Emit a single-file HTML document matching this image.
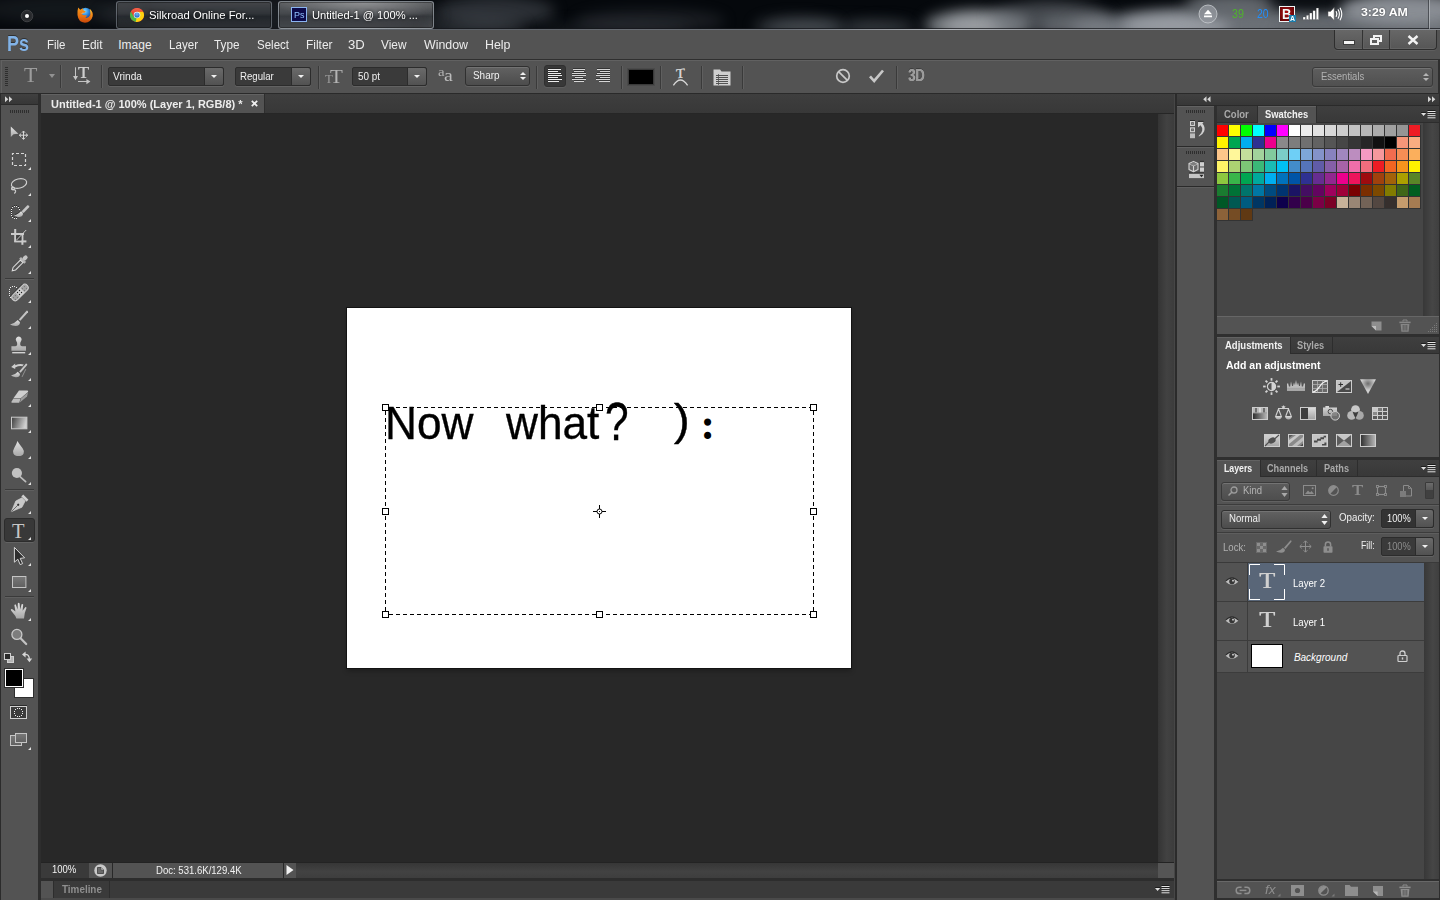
<!DOCTYPE html>
<html lang="en">
<head>
<meta charset="utf-8">
<title>Untitled-1 @ 100% (Layer 1, RGB/8) *</title>
<style>
*{box-sizing:border-box;margin:0;padding:0}
html,body{width:1440px;height:900px;overflow:hidden}
body{position:relative;background:#535353;font-family:"Liberation Sans",sans-serif;font-size:12px;color:#e6e6e6;line-height:1}
.a{position:absolute}
.t{position:absolute;white-space:nowrap;line-height:14px;height:14px}
svg{position:absolute;overflow:visible}
/* ---------- taskbar ---------- */
#task{left:0;top:0;width:1440px;height:30px;background:#05080c;overflow:hidden}
#task .sm{position:absolute;border-radius:50%;filter:blur(7px)}
.tbtn{position:absolute;top:1px;height:28px;border:1px solid rgba(150,160,170,.45);border-radius:3px;background:linear-gradient(180deg,rgba(255,255,255,.22),rgba(255,255,255,.08) 45%,rgba(255,255,255,.02) 55%,rgba(255,255,255,.10));box-shadow:inset 0 0 0 1px rgba(0,0,0,.35)}
.tl{font-size:12.5px;color:#fff;text-shadow:0 0 3px rgba(0,0,0,.9)}
/* ---------- menubar ---------- */
#menu{left:0;top:30px;width:1440px;height:29px;background:#535353}
#menu .t{top:8px;font-size:12px;color:#ececec}
/* ---------- options bar ---------- */
#opts{left:0;top:59px;width:1440px;height:35px;background:#535353;border-top:1px solid #2f2f2f;border-bottom:1px solid #2a2a2a}
.sep{position:absolute;width:1px;background:#3a3a3a;box-shadow:1px 0 0 #5f5f5f}
.field{position:absolute;height:19px;background:#3a3a3a;border:1px solid #2c2c2c;border-radius:2px;box-shadow:0 1px 0 #626262}
.field .t{top:2px;left:6px;font-size:11px;color:#f0f0f0}
.dd{position:absolute;right:0;top:0;bottom:0;width:19px;background:linear-gradient(#6a6a6a,#525252);border-left:1px solid #2c2c2c;border-radius:0 2px 2px 0}
.dd:after{content:"";position:absolute;left:6px;top:7px;border:3px solid transparent;border-top:3px solid #f0f0f0;border-bottom:0}
.pop{position:absolute;height:19px;background:linear-gradient(#626262,#4c4c4c);border:1px solid #303030;border-radius:3px;box-shadow:0 1px 0 #626262, inset 0 1px 0 #737373}
.pop .t{top:2px;left:7px;font-size:11px;color:#f0f0f0}
.ud:before,.ud:after{content:"";position:absolute;right:3px;border:3px solid transparent}
.ud:before{border-bottom:3px solid #f0f0f0;border-top:0;top:5px}
.ud:after{top:10px;border-top:3px solid #f0f0f0;border-bottom:0}
.udg:before{border-bottom-color:#b4b4b4}.udg:after{border-top-color:#b4b4b4}
/* ---------- toolbar ---------- */
#tools{left:0;top:94px;width:41px;height:806px;background:#535353;border-left:1px solid #2b2b2b;border-right:3px solid #2d2d2d}
.corner{position:absolute;width:0;height:0;border:2px solid transparent;border-right-color:#e0e0e0;border-bottom-color:#e0e0e0}
/* ---------- document ---------- */
#doc{left:41px;top:94px;width:1133px;height:806px;background:#282828}
/* ---------- dock ---------- */
#dock{left:1175px;top:94px;width:265px;height:806px;background:#535353}
.ptab{position:absolute;top:0;height:17px;font-size:11px;line-height:17px;color:#b4b4b4;border-right:1px solid #2a2a2a;background:#3b3b3b;text-align:left;white-space:nowrap}
.ptab.on{background:#535353;color:#fff;font-weight:bold;height:18px}
.phead{position:absolute;left:42px;width:221px;height:18px;background:#3b3b3b;border-bottom:1px solid #2a2a2a}
.pmenu{position:absolute;right:4px;top:4px;width:14px;height:9px}
</style>
</head>
<body>
<!-- ================= Windows taskbar ================= -->
<div id="task" class="a">
  <div class="sm" style="left:-20px;top:-6px;width:160px;height:30px;background:rgba(70,76,84,.22)"></div>
  <div class="sm" style="left:435px;top:-4px;width:120px;height:30px;background:rgba(120,126,134,.34)"></div>
  <div class="sm" style="left:425px;top:18px;width:100px;height:20px;background:rgba(110,116,124,.30)"></div>
  <div class="sm" style="left:575px;top:10px;width:150px;height:22px;background:rgba(100,106,114,.24)"></div>
  <div class="sm" style="left:100px;top:-4px;width:340px;height:40px;background:rgba(90,96,104,.22)"></div>
  <div class="sm" style="left:540px;top:22px;width:150px;height:14px;background:rgba(90,96,104,.22)"></div>
  <div class="sm" style="left:755px;top:17px;width:85px;height:20px;background:rgba(120,126,134,.42)"></div>
  <div class="sm" style="left:850px;top:20px;width:70px;height:16px;background:rgba(90,96,104,.30)"></div>
  <div class="sm" style="left:925px;top:10px;width:105px;height:30px;background:rgba(160,165,171,.78)"></div>
  <div class="sm" style="left:945px;top:16px;width:60px;height:20px;background:rgba(190,194,198,.45)"></div>
  <div class="sm" style="left:990px;top:2px;width:120px;height:34px;background:rgba(112,117,123,.62)"></div>
  <div class="sm" style="left:1070px;top:7px;width:400px;height:44px;background:rgba(114,119,125,.94)"></div>
  <div class="sm" style="left:1120px;top:13px;width:110px;height:24px;background:rgba(170,175,181,.72)"></div>
  <div class="sm" style="left:1040px;top:16px;width:80px;height:20px;background:rgba(140,145,151,.45)"></div>
  <div class="sm" style="left:770px;top:20px;width:140px;height:16px;background:rgba(110,116,124,.30)"></div>
  <div class="sm" style="left:1185px;top:-8px;width:95px;height:26px;background:rgba(108,113,119,.85)"></div>
  <div class="sm" style="left:1268px;top:-12px;width:80px;height:23px;background:rgba(10,13,17,.92)"></div>
  <div class="sm" style="left:1340px;top:-8px;width:130px;height:36px;background:rgba(146,151,157,.92)"></div>
  <div class="sm" style="left:1270px;top:24px;width:170px;height:12px;background:rgba(60,64,70,.35)"></div>
  <div class="a" style="left:0;top:28px;width:1440px;height:1px;background:rgba(20,22,26,.7)"></div>
  <div class="a" style="left:0;top:29px;width:1440px;height:1px;background:linear-gradient(90deg,#6a6f76,#5d6268 30%,#6f747b 55%,#b4b8bd 66%,#8c9096 75%,#8a8e94)"></div>

  <!-- start orb -->
  <svg style="left:20px;top:9px" width="14" height="14" viewBox="0 0 14 14"><circle cx="7" cy="7" r="5.8" fill="#2c2e31" stroke="#3e4043" stroke-width="1"/><circle cx="7" cy="7" r="3.6" fill="#232528"/><circle cx="7" cy="7" r="2" fill="#fff"/></svg>
  <!-- firefox -->
  <svg style="left:77px;top:7px" width="16" height="16" viewBox="0 0 16 16">
    <defs><radialGradient id="ffg" cx=".4" cy=".3" r=".7"><stop offset="0" stop-color="#8fdcff"/><stop offset=".5" stop-color="#2f8fe0"/><stop offset="1" stop-color="#123f9c"/></radialGradient>
    <linearGradient id="ffo" x1="0" y1="0" x2="0" y2="1"><stop offset="0" stop-color="#f59a1c"/><stop offset=".55" stop-color="#ea7310"/><stop offset="1" stop-color="#c8480a"/></linearGradient>
    <linearGradient id="ffy" x1="0" y1="0" x2="1" y2="1"><stop offset="0" stop-color="#ffd83c"/><stop offset="1" stop-color="#f08a14" stop-opacity="0"/></linearGradient></defs>
    <circle cx="8.6" cy="6.4" r="5.7" fill="url(#ffg)"/>
    <path d="M1.2 .4 L3.2 2.8 L5.6 1.2 L6.6 3.6 L8.8 4.2 L7.4 5.8 Q6 6.4 4.6 7 Q6.6 8.8 9.6 8 Q10 9.6 8.4 10.8 Q11.8 11.4 13.2 8 Q14.2 5 12.8 2 Q16.6 5.2 15.6 9.6 Q13.8 15.6 8 15.7 Q1.2 15.2 .5 8 Q.1 4 1.2 .4 Z" fill="url(#ffo)"/>
    <path d="M12.8 2 Q16.6 5.2 15.6 9.6 Q14.8 12 13.4 13.4 Q14.6 8 12.8 2 Z" fill="url(#ffy)"/>
    <path d="M3.6 6.6 L6.2 5.4 L6.8 6.2 Z" fill="#ffd9a0"/>
  </svg>
  <!-- task buttons -->
  <div class="tbtn" style="left:116px;width:156px;background:linear-gradient(180deg,rgba(255,255,255,.20),rgba(255,255,255,.11) 45%,rgba(255,255,255,.05) 55%,rgba(255,255,255,.10))"></div>
  <div class="tbtn" style="left:278px;width:156px;border-color:rgba(170,178,186,.6);background:radial-gradient(ellipse 90px 18px at 55% 0,rgba(255,255,255,.34),rgba(255,255,255,0) 100%),linear-gradient(180deg,rgba(255,255,255,.30),rgba(255,255,255,.20) 45%,rgba(255,255,255,.14) 55%,rgba(255,255,255,.20))"></div>
  <!-- chrome -->
  <svg style="left:130px;top:8px" width="14" height="14" viewBox="-7 -7 14 14">
    <defs><linearGradient id="crd" x1="0" y1="0" x2="0" y2="1"><stop offset="0" stop-color="#f4664e"/><stop offset="1" stop-color="#dd2a1c"/></linearGradient>
    <radialGradient id="cbl" cx=".5" cy=".3" r=".7"><stop offset="0" stop-color="#7ab8f2"/><stop offset="1" stop-color="#1c66c4"/></radialGradient></defs>
    <circle r="7" fill="#e0301f"/>
    <path d="M0 0 L-6.06 -3.5 A7 7 0 0 0 -1.2 6.9 L2.6 1.8 Z" fill="#4cb748"/>
    <path d="M0 0 L-1.2 6.9 A7 7 0 0 0 6.06 -3.5 L0 -3.5 Z" fill="#fdd10f"/>
    <path d="M-6.06 -3.5 A7 7 0 0 1 6.06 -3.5 L0 -3.5 L-3.1 1.9 Z" fill="url(#crd)"/>
    <circle r="3.3" fill="#eef3f8"/><circle r="2.6" fill="url(#cbl)"/>
  </svg>
  <div class="t" style="left:149px;top:7.99px;font-size:11px;line-height:14px;height:14px;color:#fff;transform:scaleX(1.0262);transform-origin:0 0;text-shadow:0 0 3px rgba(0,0,0,.9)">Silkroad Online For...</div>
  <!-- ps icon -->
  <div class="a" style="left:291px;top:7px;width:16px;height:15px;background:#0c0a4a;border:1px solid #8ab4f0"></div>
  <div class="t" style="left:294px;top:9.11px;font-size:9.5px;line-height:12px;height:12px;color:#8fc0ff;transform:scaleX(0.9471);transform-origin:0 0">Ps</div>
  <div class="t" style="left:311.6px;top:7.99px;font-size:11px;line-height:14px;height:14px;color:#fff;transform:scaleX(1.0113);transform-origin:0 0;text-shadow:0 0 3px rgba(0,0,0,.9)">Untitled-1 @ 100% ...</div>

  <!-- tray -->
  <svg style="left:1198px;top:4px" width="20" height="20" viewBox="0 0 20 20"><circle cx="10" cy="10" r="9" fill="rgba(150,154,160,.75)" stroke="rgba(200,204,208,.8)" stroke-width="1"/><path d="M10 5.8 L14 10.2 H6 Z M6 11.6 h8 v1.6 h-8 z" fill="#fff"/></svg>
  <div class="t" style="left:1232px;top:5.84px;font-size:12px;line-height:16px;height:16px;color:#4fb32c;transform:scaleX(0.8915);transform-origin:0 0">39</div>
  <div class="t" style="left:1256.7px;top:5.84px;font-size:12px;line-height:16px;height:16px;color:#1f8fff;transform:scaleX(0.8691);transform-origin:0 0">20</div>
  <div class="a" style="left:1279px;top:6px;width:16px;height:16px;background:radial-gradient(circle at 45% 40%,#a80f12,#6a0507 75%,#3c0203);border:1px solid #eef4f4"></div>
  <div class="t" style="left:1282.2px;top:5.15px;font-size:14px;line-height:18px;height:18px;color:#f4fbfb;font-weight:bold;transform:scaleX(0.9297);transform-origin:0 0">B</div>
  <div class="a" style="left:1288.5px;top:15px;width:7px;height:7px;background:#1b7dac"></div>
  <div class="t" style="left:1289.6px;top:13.84px;font-size:7.4px;line-height:10px;height:10px;color:#fff;font-weight:bold;transform:scaleX(0.9356);transform-origin:0 0">A</div>
  <svg style="left:1303px;top:8px" width="16" height="12" viewBox="0 0 16 12"><g fill="#fff" stroke="rgba(40,40,40,.6)" stroke-width=".4"><rect x="0" y="9" width="2.4" height="2.6"/><rect x="3.3" y="7.2" width="2.4" height="4.4"/><rect x="6.6" y="5" width="2.4" height="6.6"/><rect x="9.9" y="2.6" width="2.4" height="9"/><rect x="13.2" y="0" width="2.4" height="11.6"/></g></svg>
  <svg style="left:1327px;top:6px" width="17" height="16" viewBox="0 0 17 16"><path d="M1 5.4 h2.6 L7.2 1.4 V14.6 L3.6 10.6 H1 Z" fill="#fff" stroke="#555" stroke-width=".5"/><path d="M9.2 5.6 Q10.6 8 9.2 10.4 M11.2 3.8 Q13.6 8 11.2 12.2 M13.2 2.2 Q16.4 8 13.2 13.8" fill="none" stroke="#fff" stroke-width="1.1" stroke-linecap="round"/></svg>
  <div class="t" style="left:1360.8px;top:4.22px;font-size:11.5px;line-height:16px;height:16px;color:#fff;font-weight:bold;transform:scaleX(1.0740);transform-origin:0 0;text-shadow:0 0 2px rgba(0,0,0,.5)">3:29 AM</div>
  <div class="a" style="left:1428px;top:0;width:1px;height:29px;background:rgba(40,44,48,.6)"></div>
  <div class="a" style="left:1429px;top:0;width:1px;height:29px;background:rgba(200,204,208,.55)"></div>
</div>
<!-- ================= Menu bar ================= -->
<div id="menu" class="a">
  <div class="t" style="left:6.6px;top:-1.49px;font-size:22.2px;line-height:30px;height:30px;color:#82b3e7;font-weight:bold;transform:scaleX(0.8102);transform-origin:0 0;text-shadow:0 -1px 0 rgba(40,40,40,.8)">Ps</div>
  <div class="t" style="left:47px;top:7.09px;font-size:12px;line-height:16px;height:16px;color:#ececec;transform:scaleX(0.9568);transform-origin:0 0">File</div>
  <div class="t" style="left:82px;top:7.09px;font-size:12px;line-height:16px;height:16px;color:#ececec;transform:scaleX(0.9914);transform-origin:0 0">Edit</div>
  <div class="t" style="left:118.25px;top:7.09px;font-size:12px;line-height:16px;height:16px;color:#ececec">Image</div>
  <div class="t" style="left:169px;top:7.09px;font-size:12px;line-height:16px;height:16px;color:#ececec;transform:scaleX(0.9661);transform-origin:0 0">Layer</div>
  <div class="t" style="left:214px;top:7.09px;font-size:12px;line-height:16px;height:16px;color:#ececec;transform:scaleX(0.9802);transform-origin:0 0">Type</div>
  <div class="t" style="left:256.5px;top:7.09px;font-size:12px;line-height:16px;height:16px;color:#ececec;transform:scaleX(0.9595);transform-origin:0 0">Select</div>
  <div class="t" style="left:306px;top:7.09px;font-size:12px;line-height:16px;height:16px;color:#ececec;transform:scaleX(0.9938);transform-origin:0 0">Filter</div>
  <div class="t" style="left:348.25px;top:7.09px;font-size:12px;line-height:16px;height:16px;color:#ececec;transform:scaleX(1.0919);transform-origin:0 0">3D</div>
  <div class="t" style="left:380.5px;top:7.09px;font-size:12px;line-height:16px;height:16px;color:#ececec;transform:scaleX(0.9886);transform-origin:0 0">View</div>
  <div class="t" style="left:424px;top:7.09px;font-size:12px;line-height:16px;height:16px;color:#ececec;transform:scaleX(1.0309);transform-origin:0 0">Window</div>
  <div class="t" style="left:485px;top:7.09px;font-size:12px;line-height:16px;height:16px;color:#ececec;transform:scaleX(1.0332);transform-origin:0 0">Help</div>
  <!-- window controls -->
  <div class="a" style="left:1334px;top:0;width:103px;height:20px;border:1px solid #2e2e2e;border-top:0;border-radius:0 0 4px 4px;background:linear-gradient(#676767,#565656);box-shadow:inset 0 -1px 0 #636363, 0 1px 0 #5e5e5e"></div>
  <div class="a" style="left:1362px;top:0;width:1px;height:19px;background:#333;box-shadow:1px 0 0 #626262"></div>
  <div class="a" style="left:1389px;top:0;width:1px;height:19px;background:#333;box-shadow:1px 0 0 #626262"></div>
  <div class="a" style="left:1344px;top:11px;width:10px;height:3px;background:#f2f2f2;box-shadow:0 0 0 1px rgba(30,30,30,.5)"></div>
  <svg style="left:1369px;top:4px" width="14" height="12" viewBox="0 0 14 12"><g fill="none" stroke="#f2f2f2" stroke-width="2"><path d="M5 4 V2 H12 V7 H10" /><rect x="2" y="5" width="7" height="5"/></g></svg>
  <svg style="left:1407px;top:5px" width="12" height="10" viewBox="0 0 12 10"><path d="M1.5 1 L10.5 9 M10.5 1 L1.5 9" stroke="#f2f2f2" stroke-width="2.4" fill="none"/></svg>
</div>
<!-- ================= Options bar ================= -->
<div id="opts" class="a">
  <div class="a" style="left:1px;top:0;width:1437px;height:1px;background:#616161"></div>
  <div class="a" style="left:1438px;top:-1px;width:2px;height:35px;background:#2f2f2f"></div>
  <div class="a" style="left:1px;top:0;width:1px;height:33px;background:#616161"></div>
  <!-- grip -->
  <div class="a" style="left:5px;top:7px;width:3px;height:20px;background:repeating-linear-gradient(180deg,#2e2e2e 0 1px,transparent 1px 2px)"></div>
  <!-- tool preset T -->
  <div class="t" style="left:24.4px;top:1.11px;font-size:21.3px;line-height:28px;height:28px;color:#9c9c9c;font-family:'Liberation Serif',serif;transform:scaleX(1.0299);transform-origin:0 0">T</div>
  <div class="a" style="left:49px;top:14px;border:3px solid transparent;border-top:4px solid #929292;border-bottom:0"></div>
  <div class="sep" style="left:60px;top:5px;height:23px"></div>
  <!-- orientation -->
  <svg style="left:72px;top:6px" width="20" height="20" viewBox="72 66 20 20"><g fill="none" stroke="#c4c4c4" stroke-width="1"><path d="M75.5 67.3 V79"/><path d="M78 81.5 H89"/></g><path d="M73 76 H78 L75.5 80.2 Z M86.4 79 L90.4 81.5 L86.4 84.2 Z" fill="#c4c4c4"/></svg>
  <div class="t" style="left:77.6px;top:1.63px;font-size:16.8px;line-height:22px;height:22px;color:#cecece;font-family:'Liberation Serif',serif;transform:scaleX(1.0622);transform-origin:0 0;text-shadow:.3px 0 0 #cecece">T</div>
  <div class="sep" style="left:101px;top:5px;height:23px"></div>
  <!-- font family -->
  <div class="field" style="left:108px;top:7px;width:116px"><div class="t" style="left:4px;top:1.54px;font-size:10px;line-height:14px;height:14px;color:#f0f0f0;transform:scaleX(1.0163);transform-origin:0 0">Vrinda</div><div class="dd"></div></div>
  <div class="field" style="left:235px;top:7px;width:76px"><div class="t" style="left:4px;top:1.54px;font-size:10px;line-height:14px;height:14px;color:#f0f0f0;transform:scaleX(0.9637);transform-origin:0 0">Regular</div><div class="dd"></div></div>
  <div class="sep" style="left:318px;top:6px;height:23px"></div>
  <!-- tT size icon -->
  <div class="t" style="left:325.4px;top:11.38px;font-size:12.5px;line-height:16px;height:16px;color:#9a9a9a;font-family:'Liberation Serif',serif;transform:scaleX(1.0215);transform-origin:0 0">T</div>
  <div class="t" style="left:330.2px;top:4.19px;font-size:19px;line-height:26px;height:26px;color:#b4b4b4;font-family:'Liberation Serif',serif;transform:scaleX(1.1029);transform-origin:0 0">T</div>
  <div class="field" style="left:352px;top:7px;width:75px"><div class="t" style="left:5px;top:1.54px;font-size:10px;line-height:14px;height:14px;color:#f0f0f0;transform:scaleX(0.9892);transform-origin:0 0">50 pt</div><div class="dd"></div></div>
  <!-- aa -->
  <div class="t" style="left:437.6px;top:3.98px;font-size:12.5px;line-height:16px;height:16px;color:#b4b4b4;font-family:'Liberation Serif',serif;transform:scaleX(1.1896);transform-origin:0 0">a</div>
  <div class="t" style="left:444.2px;top:4.56px;font-size:16.7px;line-height:22px;height:22px;color:#bcbcbc;font-family:'Liberation Serif',serif;transform:scaleX(1.1872);transform-origin:0 0">a</div>
  <div class="pop ud" style="left:465px;top:6px;width:65px;height:20px"><div class="t" style="left:7px;top:2.04px;font-size:10px;line-height:14px;height:14px;color:#f0f0f0;transform:scaleX(0.9931);transform-origin:0 0">Sharp</div></div>
  <div class="sep" style="left:536px;top:6px;height:23px"></div>
  <!-- align -->
  <div class="a" style="left:544px;top:5px;width:22px;height:22px;background:#383838;border:1px solid #303030;border-radius:3px;box-shadow:0 1px 0 #5e5e5e"></div>
  <svg style="left:0;top:0" width="640" height="34" viewBox="0 0 640 34" shape-rendering="crispEdges"><rect x="548" y="8" width="13" height="1" fill="rgba(30,30,30,.55)"/><rect x="548" y="9" width="13" height="1" fill="#ececec"/><rect x="548" y="10" width="10" height="1" fill="rgba(30,30,30,.55)"/><rect x="548" y="11" width="10" height="1" fill="#ececec"/><rect x="548" y="12" width="13" height="1" fill="rgba(30,30,30,.55)"/><rect x="548" y="13" width="13" height="1" fill="#ececec"/><rect x="548" y="14" width="14" height="1" fill="rgba(30,30,30,.55)"/><rect x="548" y="15" width="14" height="1" fill="#ececec"/><rect x="548" y="16" width="10" height="1" fill="rgba(30,30,30,.55)"/><rect x="548" y="17" width="10" height="1" fill="#ececec"/><rect x="548" y="18" width="14" height="1" fill="rgba(30,30,30,.55)"/><rect x="548" y="19" width="14" height="1" fill="#ececec"/><rect x="548" y="20" width="11" height="1" fill="rgba(30,30,30,.55)"/><rect x="548" y="21" width="11" height="1" fill="#ececec"/><rect x="573" y="8" width="12" height="1" fill="rgba(30,30,30,.55)"/><rect x="573" y="9" width="12" height="1" fill="#d6d6d6"/><rect x="574" y="10" width="10" height="1" fill="rgba(30,30,30,.55)"/><rect x="574" y="11" width="10" height="1" fill="#d6d6d6"/><rect x="572" y="12" width="14" height="1" fill="rgba(30,30,30,.55)"/><rect x="572" y="13" width="14" height="1" fill="#d6d6d6"/><rect x="572" y="14" width="14" height="1" fill="rgba(30,30,30,.55)"/><rect x="572" y="15" width="14" height="1" fill="#d6d6d6"/><rect x="575" y="16" width="8" height="1" fill="rgba(30,30,30,.55)"/><rect x="575" y="17" width="8" height="1" fill="#d6d6d6"/><rect x="572" y="18" width="14" height="1" fill="rgba(30,30,30,.55)"/><rect x="572" y="19" width="14" height="1" fill="#d6d6d6"/><rect x="574" y="20" width="10" height="1" fill="rgba(30,30,30,.55)"/><rect x="574" y="21" width="10" height="1" fill="#d6d6d6"/><rect x="597" y="8" width="13" height="1" fill="rgba(30,30,30,.55)"/><rect x="597" y="9" width="13" height="1" fill="#d6d6d6"/><rect x="600" y="10" width="10" height="1" fill="rgba(30,30,30,.55)"/><rect x="600" y="11" width="10" height="1" fill="#d6d6d6"/><rect x="597" y="12" width="13" height="1" fill="rgba(30,30,30,.55)"/><rect x="597" y="13" width="13" height="1" fill="#d6d6d6"/><rect x="596" y="14" width="14" height="1" fill="rgba(30,30,30,.55)"/><rect x="596" y="15" width="14" height="1" fill="#d6d6d6"/><rect x="600" y="16" width="10" height="1" fill="rgba(30,30,30,.55)"/><rect x="600" y="17" width="10" height="1" fill="#d6d6d6"/><rect x="596" y="18" width="14" height="1" fill="rgba(30,30,30,.55)"/><rect x="596" y="19" width="14" height="1" fill="#d6d6d6"/><rect x="599" y="20" width="11" height="1" fill="rgba(30,30,30,.55)"/><rect x="599" y="21" width="11" height="1" fill="#d6d6d6"/></svg>
  <div class="sep" style="left:621px;top:6px;height:23px"></div>
  <div class="a" style="left:628px;top:9px;width:26px;height:16px;background:#000;border:1px solid #3a3a3a;box-shadow:0 0 0 1px #4a4a4a"></div>
  <div class="sep" style="left:660px;top:6px;height:23px"></div>
  <!-- warp text -->
  <svg style="left:672px;top:7px" width="17" height="20" viewBox="672 67 17 20"><path d="M673.4 85.4 Q680.4 74.6 687.6 85.4" fill="none" stroke="#d8d8d8" stroke-width="1.3"/></svg>
  <div class="t" style="left:676px;top:5.44px;font-size:13.5px;line-height:18px;height:18px;color:#d4d4d4;font-family:'Liberation Serif',serif;transform:scaleX(1.0914);transform-origin:0 0;transform:scaleX(1.1) rotate(-8deg) skewX(-8deg);transform-origin:50% 100%;text-shadow:.3px 0 0 #d4d4d4">T</div>
  <div class="sep" style="left:701px;top:6px;height:23px"></div>
  <!-- panels toggle -->
  <svg style="left:713px;top:9px" width="18" height="17" viewBox="0 0 18 17"><path d="M.5 .5 H7 L8.5 2.5 H17.5 V16.5 H.5 Z" fill="#d0d0d0"/><g stroke="#535353" stroke-width="1"><path d="M3 6.5H15M3 8.5H15M3 10.5H15M3 12.5H15M3 14.5H15"/><path d="M5.5 5V16" stroke-width=".8"/></g></svg>
  <div class="sep" style="left:742px;top:6px;height:23px"></div>
  <!-- cancel / commit -->
  <svg style="left:835px;top:8px" width="16" height="16" viewBox="0 0 16 16"><circle cx="8" cy="8" r="6.3" fill="none" stroke="#c8c8c8" stroke-width="1.7"/><path d="M3.6 3.6 L12.4 12.4" stroke="#c8c8c8" stroke-width="1.7"/></svg>
  <svg style="left:868px;top:9px" width="17" height="15" viewBox="0 0 17 15"><path d="M1 8.2 L3 6.6 L6 10 L14 .8 L16 2.2 L6.2 14 Z" fill="#c8c8c8"/></svg>
  <div class="sep" style="left:896px;top:6px;height:23px"></div>
  <div class="t" style="left:908.4px;top:5.18px;font-size:16.8px;line-height:22px;height:22px;color:#9a9a9a;font-weight:bold;transform:scaleX(0.7636);transform-origin:0 0;text-shadow:.6px 0 0 #b4b4b4,0 -1px 0 rgba(40,40,40,.5)">3D</div>
  <!-- essentials -->
  <div class="pop ud udg" style="left:1312px;top:7px;width:121px;height:20px;background:linear-gradient(#5e5e5e,#505050);border-color:#3a3a3a"><div class="t" style="left:7.5px;top:1.54px;font-size:10px;line-height:14px;height:14px;color:#b2b2b2;transform:scaleX(0.9490);transform-origin:0 0">Essentials</div></div>
</div>
<!-- ================= Tools panel ================= -->
<div id="tools" class="a">
  <div class="a" style="left:0;top:0;width:37px;height:11px;background:linear-gradient(#404040,#373737);border-bottom:1px solid #2a2a2a"></div>
  <svg style="left:4px;top:2px" width="8" height="7" viewBox="0 0 8 7"><path d="M0 .3 L3.3 3.3 L0 6.3 Z M4 .3 L7.3 3.3 L4 6.3 Z" fill="#d4d4d4"/></svg>
  <div class="a" style="left:9px;top:16px;width:19px;height:3px;background:repeating-linear-gradient(90deg,#2e2e2e 0 1px,transparent 1px 2px)"></div>
  <svg style="left:-1px;top:-94px" width="40" height="900" viewBox="0 0 40 900">
    <defs>
      <linearGradient id="gv" x1="0" y1="0" x2="0" y2="1"><stop offset="0" stop-color="#e2e2e2"/><stop offset="1" stop-color="#a8a8a8"/></linearGradient>
      <linearGradient id="gd" x1="0" y1="0" x2="1" y2=".25"><stop offset="0" stop-color="#3c3c3c"/><stop offset="1" stop-color="#cfcfcf"/></linearGradient>
      <linearGradient id="gr" x1="0" y1="0" x2="0" y2="1"><stop offset="0" stop-color="#787878"/><stop offset="1" stop-color="#606060"/></linearGradient>
    </defs>
    <!-- move -->
    <path d="M10.8 126.6 V137 L13.6 134.2 L18.4 133.8 Z" fill="url(#gv)"/>
    <g stroke="#d8d8d8" stroke-width="1" fill="none"><path d="M19.5 135.2 H27.5 M23.5 131.2 V139.2"/><path d="M21 133.7 L19.3 135.2 L21 136.7 M26 133.7 L27.7 135.2 L26 136.7 M22 132.7 L23.5 131 L25 132.7 M22 137.7 L23.5 139.4 L25 137.7"/></g>
    <!-- marquee -->
    <rect x="12.5" y="153.5" width="13" height="12" fill="none" stroke="#d6d6d6" stroke-width="1.2" stroke-dasharray="3 2" stroke-dashoffset="1.5"/>
    <!-- lasso -->
    <g fill="none" stroke="#cfcfcf" stroke-width="1.2"><ellipse cx="19" cy="183.5" rx="7.8" ry="4.6" transform="rotate(-14 19 183.5)"/><path d="M12.2 187.5 Q11 189.5 13 189.6 Q15.8 189.4 15.6 191.4 Q15.4 192.8 14.2 193.4"/><circle cx="13" cy="188.4" r="1.3"/></g>
    <!-- quick select -->
    <g shape-rendering="crispEdges"><rect x="14" y="205" width="1" height="1" fill="#2a2a2a"/><rect x="14" y="206" width="1" height="1" fill="#e8e8e8"/><rect x="16" y="205" width="1" height="1" fill="#2a2a2a"/><rect x="16" y="206" width="1" height="1" fill="#e8e8e8"/><rect x="12" y="206" width="1" height="1" fill="#2a2a2a"/><rect x="12" y="207" width="1" height="1" fill="#e8e8e8"/><rect x="18" y="206" width="1" height="1" fill="#2a2a2a"/><rect x="18" y="207" width="1" height="1" fill="#e8e8e8"/><rect x="11" y="208" width="1" height="1" fill="#2a2a2a"/><rect x="11" y="209" width="1" height="1" fill="#e8e8e8"/><rect x="19" y="208" width="1" height="1" fill="#2a2a2a"/><rect x="19" y="209" width="1" height="1" fill="#e8e8e8"/><rect x="11" y="210" width="1" height="1" fill="#2a2a2a"/><rect x="11" y="211" width="1" height="1" fill="#e8e8e8"/><rect x="11" y="212" width="1" height="1" fill="#2a2a2a"/><rect x="11" y="213" width="1" height="1" fill="#e8e8e8"/><rect x="11" y="214" width="1" height="1" fill="#2a2a2a"/><rect x="11" y="215" width="1" height="1" fill="#e8e8e8"/><rect x="12" y="216" width="1" height="1" fill="#2a2a2a"/><rect x="12" y="217" width="1" height="1" fill="#e8e8e8"/><rect x="14" y="217" width="1" height="1" fill="#2a2a2a"/><rect x="14" y="218" width="1" height="1" fill="#e8e8e8"/><rect x="16" y="217" width="1" height="1" fill="#2a2a2a"/><rect x="16" y="218" width="1" height="1" fill="#e8e8e8"/></g>
    <path d="M27.4 205.3 Q29.6 205.2 29.4 207 L23.6 213 L21.6 211.2 Z" fill="#c6c6c6"/>
    <path d="M14 215.6 Q17.6 214.6 20 212 Q21.2 211 22.2 212 Q23.4 213.4 22.8 215 Q21.6 217.4 18 217 Q15.4 216.6 14 215.6 Z" fill="url(#gv)"/>
    <path d="M15 214.6 Q18 213.6 20 211.6" stroke="#2c2c2c" stroke-width=".8" fill="none"/>
    <!-- crop -->
    <g fill="#cacaca"><rect x="11" y="233" width="13" height="2"/><rect x="14.2" y="229" width="2" height="12.8"/><rect x="21.4" y="233.2" width="2" height="11.6"/><rect x="14.2" y="240.4" width="12.2" height="2"/></g>
    <rect x="16.2" y="235.2" width="5.2" height="5.2" fill="#404040"/>
    <path d="M16.4 240.2 L26.2 230" stroke="#d4d4d4" stroke-width=".9"/>
    <!-- eyedropper -->
    <g transform="rotate(45 19 264)"><rect x="17" y="252.6" width="4" height="5.6" rx="2" fill="#c4c4c4"/><rect x="15.4" y="257.6" width="7.2" height="2.6" fill="#b6b6b6"/><path d="M17.2 260.2 H20.8 V270.6 L19 273.6 L17.2 270.6 Z" fill="#535353" stroke="#dcdcdc" stroke-width="1"/></g>
    <!-- separators -->
    <g stroke="#3a3a3a" stroke-width="1"><path d="M5 278.5 H34 M5 489.5 H34 M5 596.5 H34"/></g>
    <g stroke="#5f5f5f" stroke-width="1"><path d="M5 279.5 H34 M5 490.5 H34 M5 597.5 H34"/></g>
    <!-- healing -->
    <g shape-rendering="crispEdges"><rect x="12" y="286" width="1" height="1" fill="#ececec"/><rect x="14" y="286" width="1" height="1" fill="#ececec"/><rect x="10" y="287" width="1" height="1" fill="#ececec"/><rect x="16" y="287" width="1" height="1" fill="#ececec"/><rect x="9" y="289" width="1" height="1" fill="#ececec"/><rect x="9" y="291" width="1" height="1" fill="#ececec"/><rect x="9" y="293" width="1" height="1" fill="#ececec"/><rect x="9" y="295" width="1" height="1" fill="#ececec"/><rect x="10" y="297" width="1" height="1" fill="#ececec"/></g>
    <g transform="rotate(-45 20 292.5)"><rect x="9.8" y="289.1" width="20.4" height="6.8" rx="3.4" fill="#a2a2a2" stroke="#cdcdcd" stroke-width="1"/><rect x="16.6" y="289.1" width="6.8" height="6.8" fill="#cfcfcf"/><path d="M10.6 288.2 H28" stroke="#2c2c2c" stroke-width=".8" fill="none" opacity=".8"/></g>
    <g fill="#1e1e1e"><circle cx="19.5" cy="290.5" r=".7"/><circle cx="17.5" cy="292.5" r=".7"/><circle cx="21.5" cy="292.5" r=".7"/><circle cx="19.5" cy="294.5" r=".7"/></g>
    <g fill="#6e6e6e"><circle cx="24.4" cy="286.6" r=".55"/><circle cx="22.4" cy="288.6" r=".55"/><circle cx="26.4" cy="288.6" r=".55"/><circle cx="24.4" cy="290.4" r=".55"/><circle cx="15.4" cy="295.6" r=".55"/><circle cx="13.4" cy="297.6" r=".55"/><circle cx="17.4" cy="297.6" r=".55"/><circle cx="15.4" cy="299.4" r=".55"/></g>
    <!-- brush -->
    <path d="M26.8 310.6 Q28.4 310.8 28 312.2 L20.4 320.8 L18.8 319.4 Z" fill="#c4c4c4"/>
    <path d="M10 324.6 Q14.4 323.6 17.8 320 L20 322.2 Q19.8 326.2 15.4 326 Q12 325.8 10 324.6 Z" fill="url(#gv)"/>
    <!-- stamp -->
    <path d="M18.7 336.5 a2.9 2.9 0 0 1 2.3 4.7 Q20 342.6 20.2 344.4 Q20.4 346 22 346.2 H26 V350.8 H11.4 V346.2 H15.4 Q17 346 17.2 344.4 Q17.4 342.6 16.4 341.2 a2.9 2.9 0 0 1 2.3 -4.7 Z" fill="url(#gv)"/>
    <rect x="12.2" y="352" width="13" height="1.4" fill="#d2d2d2"/>
    <!-- history brush -->
    <path d="M26 363.6 Q27.6 363.8 27.2 365 L20.6 372.8 L19.2 371.6 Z" fill="#c6c6c6"/>
    <path d="M11 375.6 Q15 375 17.8 371.8 L20 374 Q19.8 377.4 15.8 377.2 Q12.6 377 11 375.6 Z" fill="url(#gv)"/>
    <path d="M11.2 367 L15.2 363.4 V365.2 Q20 363.4 23.8 364.6 L22.4 366.2 Q19 365.6 15.2 367.4 V369 Z" fill="#cdcdcd"/>
    <path d="M25.6 369.6 L22.2 376.6" stroke="#dcdcdc" stroke-width="1" stroke-dasharray="1 1.2" fill="none"/>
    <!-- eraser -->
    <path d="M19 390.4 H27.4 Q28.6 390.6 28 392 L21 398 H13.6 Z" fill="#cfcfcf"/>
    <path d="M13.4 398.4 H20.6 L19.2 402.8 H12 Q11 402.6 11.6 401.4 Z" fill="#bdbdbd"/>
    <path d="M21.2 398.2 L28 392.4 L27 396.4 L19.8 402.6 Z" fill="#9c9c9c"/>
    <!-- gradient -->
    <rect x="11.5" y="417.2" width="15.4" height="11.6" fill="url(#gd)" stroke="#cacaca" stroke-width="1"/>
    <!-- blur -->
    <path d="M17.4 441 Q19.4 444.4 22.6 448.2 Q24.6 451 23.6 453.4 Q22.4 456 18.6 456 Q14.8 456 13.4 453.4 Q12.4 451 14.2 448 Q16.6 444 17.4 441 Z" fill="url(#gv)"/>
    <!-- dodge -->
    <circle cx="16.9" cy="473" r="5.1" fill="#c2c2c2"/>
    <path d="M20 476.6 L25.6 481.6" stroke="#bcbcbc" stroke-width="1.7" stroke-linecap="round"/>
    <!-- pen -->
    <g transform="translate(11.3 511.7) scale(.88) translate(-11.3 -511.7) rotate(45 19.6 503.4)"><rect x="15.4" y="491.8" width="8.4" height="3" fill="#cfcfcf"/><path d="M17 495.4 H22.2 L24.6 503 L19.6 515.2 L14.6 503 Z" fill="#c8c8c8" stroke="#d8d8d8" stroke-width=".6"/><path d="M19.6 515 V505" stroke="#4a4a4a" stroke-width=".8"/><circle cx="19.6" cy="504" r="1.25" fill="#333"/></g>
    <!-- type (selected) -->
    <rect x="4.5" y="518.5" width="30" height="23" rx="2.5" fill="#383838" stroke="#2c2c2c"/>
    <path d="M5.5 542.5 H33.5" stroke="#626262"/>
    <!-- path select -->
    <path d="M14.4 547.4 V562.2 L17.8 559.2 L20.2 564.6 L22.6 563.6 L20.2 558.4 L24.6 557.8 Z" fill="#2e2e2e" stroke="#d6d6d6" stroke-width="1" stroke-linejoin="miter"/>
    <!-- rectangle -->
    <rect x="12.5" y="576.5" width="13.4" height="11" fill="url(#gr)" stroke="#c4c4c4"/>
    <!-- hand -->
    <path d="M16.4 618.4 Q15.6 615.6 12.6 612.4 Q10.4 610 10.8 609.4 Q12 608.4 14.4 610.8 L15.4 611.6 L14.4 605.2 Q14.6 604 15.8 604.6 L17.6 609.6 L17.8 603.4 Q18.6 602.2 19.6 603.4 L20.2 609.6 L21.6 604.2 Q22.6 603.4 23.2 604.6 L22.6 610.8 L25.2 607.2 Q26.6 606.8 26.4 608.2 Q24.6 612 24 618.4 Z" fill="url(#gv)"/>
    <!-- zoom -->
    <circle cx="16.9" cy="634.4" r="5" fill="#7d7d7d" stroke="#c9c9c9" stroke-width="1.3"/>
    <path d="M20.8 638.4 L26.2 644" stroke="#c2c2c2" stroke-width="2.2" stroke-linecap="round"/>
    <!-- default colours -->
    <rect x="7.5" y="656.5" width="6" height="6" fill="#b4b4b4" stroke="#cfcfcf"/>
    <rect x="4.5" y="653.5" width="6" height="6" fill="#2a2a2a" stroke="#cfcfcf"/>
    <!-- swap -->
    <g fill="none" stroke="#d6d6d6" stroke-width="1.3"><path d="M24 654.4 Q29.6 653.6 29.4 660"/></g>
    <path d="M22 654.6 L25.6 651.6 V657.6 Z M26.6 658.6 H32.2 L29.4 662.2 Z" fill="#d6d6d6"/>
    <!-- fg / bg -->
    <rect x="14" y="678" width="20" height="20" fill="#2e2e2e"/>
    <rect x="15" y="679" width="18" height="18" fill="#ffffff"/>
    <rect x="4" y="668" width="20" height="20" fill="#2e2e2e"/>
    <rect x="5" y="669" width="18" height="18" fill="#ffffff"/>
    <rect x="6" y="670" width="16" height="16" fill="#000"/>
    <!-- quick mask -->
    <path d="M10 705.5 H27" stroke="#2c2c2c"/>
    <rect x="10.5" y="706.5" width="16" height="12" fill="#3c3c3c" stroke="#d0d0d0"/>
    <g shape-rendering="crispEdges"><rect x="17" y="708" width="1" height="1" fill="#f0f0f0"/><rect x="19" y="708" width="1" height="1" fill="#f0f0f0"/><rect x="15" y="709" width="1" height="1" fill="#f0f0f0"/><rect x="21" y="709" width="1" height="1" fill="#f0f0f0"/><rect x="14" y="711" width="1" height="1" fill="#f0f0f0"/><rect x="22" y="711" width="1" height="1" fill="#f0f0f0"/><rect x="14" y="713" width="1" height="1" fill="#f0f0f0"/><rect x="22" y="713" width="1" height="1" fill="#f0f0f0"/><rect x="15" y="715" width="1" height="1" fill="#f0f0f0"/><rect x="21" y="715" width="1" height="1" fill="#f0f0f0"/><rect x="17" y="716" width="1" height="1" fill="#f0f0f0"/><rect x="19" y="716" width="1" height="1" fill="#f0f0f0"/></g>
    <!-- screen mode -->
    <rect x="10.5" y="735.5" width="11" height="10" fill="url(#gr)" stroke="#c4c4c4"/>
    <rect x="15.5" y="733.5" width="11" height="9" fill="url(#gr)" stroke="#c4c4c4"/>
    <!-- corner triangles -->
    <g fill="#e2e2e2">
      <path d="M31 167 V170 H28 Z M31 193 V196 H28 Z M31 219 V222 H28 Z M31 245 V248 H28 Z M31 271 V274 H28 Z M31 300 V303 H28 Z M31 326 V329 H28 Z M31 352 V355 H28 Z M31 378 V381 H28 Z M31 404 V407 H28 Z M31 430 V433 H28 Z M31 456 V459 H28 Z M31 482 V485 H28 Z M31 511 V514 H28 Z M31 537 V540 H28 Z M31 563 V566 H28 Z M31 589 V592 H28 Z M31 618 V621 H28 Z M31 747 V750 H28 Z"/>
    </g>
  </svg>
  <div class="t" style="left:11px;top:426px;font-family:'Liberation Serif',serif;font-size:20.5px;line-height:22px;height:22px;color:#c6c6c6">T</div>
</div>
<!-- ================= Document window ================= -->
<div id="doc" class="a">
  <!-- tab strip -->
  <div class="a" style="left:0;top:0;width:1133px;height:19px;background:linear-gradient(#3e3e3e,#383838)"></div>
  <div class="a" style="left:0;top:0;width:223px;height:19px;background:#535353;border-top:1px solid #626262;box-shadow:1px 0 0 #2e2e2e"></div>
  <div class="t" style="left:9.5px;top:3.36px;font-size:10.5px;line-height:14px;height:14px;color:#ededed;font-weight:bold;transform:scaleX(1.0467);transform-origin:0 0">Untitled-1 @ 100% (Layer 1, RGB/8) *</div>
  <svg style="left:209.5px;top:6px" width="7" height="7" viewBox="0 0 7 7"><path d="M.8 .8 L6.2 6.2 M6.2 .8 L.8 6.2" stroke="#f0f0f0" stroke-width="1.7"/></svg>
  <div class="a" style="left:0;top:19px;width:1133px;height:1px;background:#262626"></div>
  <!-- scrollbars -->
  <div class="a" style="left:1117px;top:20px;width:16px;height:748px;background:linear-gradient(90deg,#343434,#424242 55%,#3c3c3c)"></div>
  <div class="a" style="left:255px;top:769px;width:862px;height:15px;background:linear-gradient(180deg,#363636,#424242 55%,#3e3e3e)"></div>
  <div class="a" style="left:1117px;top:769px;width:16px;height:15px;background:#555"></div>
  <!-- status bar -->
  <div class="a" style="left:0;top:768px;width:1133px;height:1px;background:#232323"></div>
  <div class="a" style="left:0;top:769px;width:48px;height:15px;background:#3a3a3a"></div>
  <div class="t" style="left:11.4px;top:768.83px;font-size:10px;line-height:14px;height:14px;color:#f2f2f2;transform:scaleX(0.9501);transform-origin:0 0">100%</div>
  <div class="a" style="left:48px;top:769px;width:23px;height:15px;background:#535353"></div>
  <svg style="left:53px;top:770px" width="13" height="13" viewBox="0 0 13 13"><circle cx="6.5" cy="6.5" r="6.2" fill="#c8c8c8"/><path d="M3.5 3.5 H7 L9.5 6 V9.5 H3.5 Z" fill="#6a6a6a" stroke="#3c3c3c" stroke-width=".8"/><path d="M7 3.5 V6 H9.5" fill="#d8d8d8" stroke="#3c3c3c" stroke-width=".6"/></svg>
  <div class="a" style="left:72px;top:769px;width:170px;height:15px;background:#535353"></div>
  <div class="t" style="left:114.5px;top:769.83px;font-size:10px;line-height:14px;height:14px;color:#f2f2f2;transform:scaleX(0.9563);transform-origin:0 0">Doc: 531.6K/129.4K</div>
  <div class="a" style="left:243px;top:769px;width:12px;height:15px;background:#535353"></div>
  <svg style="left:245px;top:771px" width="8" height="10" viewBox="0 0 8 10"><path d="M.5 0 L7.5 5 L.5 10 Z" fill="#f2f2f2"/></svg>
  <div class="a" style="left:0;top:784px;width:1136px;height:3px;background:#2d2d2d"></div>
  <!-- timeline -->
  <div class="a" style="left:0;top:787px;width:1133px;height:17px;background:#3a3a3a"></div>
  <div class="a" style="left:0;top:787px;width:13px;height:17px;background:#535353;border-right:1px solid #2d2d2d"></div>
  <div class="a" style="left:68px;top:787px;width:1px;height:17px;background:#2d2d2d"></div>
  <div class="t" style="left:20.7px;top:788.74px;font-size:10px;line-height:14px;height:14px;color:#8f8f8f;font-weight:bold;transform:scaleX(0.9880);transform-origin:0 0">Timeline</div>
  <svg style="left:1115px;top:791px" width="15" height="9" viewBox="0 0 15 9"><path d="M-1 3 H4.2 L1.6 6 Z" fill="#e0e0e0"/><path d="M-1 2.5 H4.2" stroke="#1e1e1e" stroke-width="1"/><path d="M5.5 .5 H13.5 M5.5 2.6 H13.5 M5.5 4.7 H13.5 M5.5 6.8 H13.5" stroke="#1a1a1a" stroke-width="1"/><path d="M5.5 1.5 H13.5 M5.5 3.6 H13.5 M5.5 5.7 H13.5 M5.5 7.8 H13.5" stroke="#e4e4e4" stroke-width="1"/></svg>
  <div class="a" style="left:0;top:804px;width:1133px;height:2px;background:#4a4a4a"></div>

  <!-- canvas -->
  <div class="a" style="left:306px;top:214px;width:504px;height:360px;background:#fff;box-shadow:0 0 0 1px #131313,0 3px 5px rgba(0,0,0,.28)"></div>
  <div class="t" style="left:344px;top:303px;font-size:45.8px;line-height:54px;height:54px;color:#000;transform:scaleX(.965);transform-origin:0 0;-webkit-text-stroke:.35px #000">Now</div>
  <div class="t" style="left:465px;top:303px;font-size:45.8px;line-height:54px;height:54px;color:#000;transform:scaleX(.965);transform-origin:0 0;-webkit-text-stroke:.35px #000">what</div>
  <div class="t" style="left:563.6px;top:296.7px;font-size:53px;line-height:62px;height:62px;color:#000;transform:scaleX(.8);transform-origin:0 0;-webkit-text-stroke:.3px #000">?</div>
  <div class="t" style="left:633.4px;top:300.2px;font-size:44.4px;line-height:52px;height:52px;color:#000;transform:scaleX(1.06);transform-origin:0 0;-webkit-text-stroke:.4px #000">)</div>
  <div class="t" style="left:659.5px;top:300.72px;font-size:43.5px;line-height:58px;height:58px;color:#000;font-family:'Liberation Serif',serif;font-weight:bold">:</div>
  <!-- text box -->
  <svg style="left:0;top:0" width="1133" height="806" viewBox="41 94 1133 806" shape-rendering="crispEdges">
    <g fill="none" stroke="#000" stroke-width="1" stroke-dasharray="4 3">
      <path d="M389 407.5 H810 M389 614.5 H810 M385.5 411 V611 M813.5 411 V611"/>
    </g>
    <g fill="#fff" stroke="#000" stroke-width="1">
      <rect x="382.5" y="404.5" width="6" height="6"/><rect x="596.5" y="404.5" width="6" height="6"/><rect x="810.5" y="404.5" width="6" height="6"/>
      <rect x="382.5" y="508.5" width="6" height="6"/><rect x="810.5" y="508.5" width="6" height="6"/>
      <rect x="382.5" y="611.5" width="6" height="6"/><rect x="596.5" y="611.5" width="6" height="6"/><rect x="810.5" y="611.5" width="6" height="6"/>
    </g>
    <g fill="none" stroke="#000" stroke-width="1"><path d="M599.5 505 V518 M593 511.5 H606"/><circle cx="599.5" cy="511.5" r="2.5" fill="#fff" shape-rendering="auto"/><rect x="599" y="511" width="1" height="1" fill="#000" stroke="none"/></g>
  </svg>
</div>
<!-- ================= Right dock ================= -->
<div class="a" id="dock" style="left:0;top:0;width:0;height:0;background:none">
<div class="a" style="left:1174px;top:94px;width:3px;height:806px;background:#2b2b2b;border-left:1px solid #464646"></div>
<div class="a" style="left:1177px;top:94px;width:263px;height:806px;background:#535353"></div>
<div class="a" style="left:1177px;top:94px;width:263px;height:11px;background:linear-gradient(#404040,#373737)"></div>
<div class="a" style="left:1177px;top:105px;width:263px;height:1px;background:#2a2a2a"></div>
<svg style="left:1203px;top:96px" width="8" height="7" viewBox="0 0 8 7"><path d="M3.5 .3 L.2 3.3 L3.5 6.3 Z M7.5 .3 L4.2 3.3 L7.5 6.3 Z" fill="#d4d4d4"/></svg>
<svg style="left:1428px;top:96px" width="8" height="7" viewBox="0 0 8 7"><path d="M0 .3 L3.3 3.3 L0 6.3 Z M4 .3 L7.3 3.3 L4 6.3 Z" fill="#d4d4d4"/></svg>
<div class="a" style="left:1214px;top:106px;width:3px;height:794px;background:#2f2f2f"></div>
<div class="a" style="left:1177px;top:146px;width:37px;height:1px;background:#2a2a2a"></div>
<div class="a" style="left:1177px;top:147px;width:37px;height:1px;background:#626262"></div>
<div class="a" style="left:1177px;top:186px;width:37px;height:1px;background:#2a2a2a"></div>
<div class="a" style="left:1177px;top:187px;width:37px;height:1px;background:#5e5e5e"></div>
<div class="a" style="left:1177px;top:106px;width:37px;height:1px;background:#626262"></div>
<div class="a" style="left:1186px;top:110px;width:19px;height:3px;background:repeating-linear-gradient(90deg,#2e2e2e 0 1px,transparent 1px 2px)"></div>
<div class="a" style="left:1186px;top:151px;width:19px;height:3px;background:repeating-linear-gradient(90deg,#2e2e2e 0 1px,transparent 1px 2px)"></div>
<svg style="left:1188px;top:118px" width="20" height="22" viewBox="1188 118 20 22"><path d="M1190 120.5 H1195 M1198 121.3 H1203.6" stroke="#2c2c2c" stroke-width="1" fill="none"/><g fill="none" stroke="#d0d0d0" stroke-width="1.2"><rect x="1190.6" y="121.6" width="3.8" height="3.8"/><rect x="1190.6" y="127.9" width="3.8" height="3.8"/></g><rect x="1192" y="123" width="1.2" height="1.2" fill="#8a8a8a"/><rect x="1192" y="129.2" width="1.2" height="1.2" fill="#8a8a8a"/><rect x="1190" y="133.4" width="5" height="4.8" fill="#bdbdbd"/><path d="M1198 122 H1203.6 L1202.4 123.4 Q1205.6 127 1204.2 131.2 Q1203 134.4 1199 136.6 L1198.6 136 Q1201.6 133.6 1202.2 130.6 Q1202.8 127.6 1200.6 125.2 L1198 127.6 Z" fill="#d0d0d0"/></svg>
<svg style="left:1188px;top:159px" width="20" height="22" viewBox="1188 159 20 22"><path d="M1200 161.3 H1204 M1189 173 H1204" stroke="#2c2c2c" stroke-width="1" fill="none"/><g stroke="#d4d4d4" stroke-width="1.1" stroke-linejoin="round"><path d="M1193.5 161.4 L1198 163.6 V169.4 L1193.5 171.8 L1189 169.4 V163.6 Z" fill="#6a6a6a"/><path d="M1189 163.6 L1193.5 165.8 L1198 163.6 M1193.5 165.8 V171.8" fill="none"/></g><path d="M1189.6 163.9 L1193.5 165.8 L1197.4 163.9 L1193.5 162 Z" fill="#7e7e7e"/><rect x="1200" y="162.2" width="4" height="4.2" fill="#cfcfcf"/><rect x="1200" y="167.5" width="4" height="4.2" fill="#cfcfcf"/><rect x="1189" y="173.8" width="15" height="4.3" fill="#c6c6c6"/><path d="M1199.4 174.8 H1203.6 L1201.5 177.2 Z" fill="#222"/></svg>
<div class="a" style="left:1217px;top:106px;width:223px;height:17px;background:linear-gradient(#3f3f3f,#383838)"></div>
<div class="a" style="left:1217px;top:122px;width:223px;height:1px;background:#2d2d2d"></div>
<div class="t" style="left:1224.2px;top:107.53px;font-size:10px;line-height:14px;height:14px;color:#a9a9a9;font-weight:bold;transform:scaleX(0.9499);transform-origin:0 0">Color</div>
<div class="a" style="left:1257px;top:106px;width:1px;height:16px;background:#2d2d2d"></div>
<div class="a" style="left:1258px;top:106px;width:58px;height:17px;background:#535353;border-top:1px solid #626262"></div>
<div class="t" style="left:1265px;top:107.53px;font-size:10px;line-height:14px;height:14px;color:#f2f2f2;font-weight:bold;transform:scaleX(0.9364);transform-origin:0 0">Swatches</div>
<div class="a" style="left:1316px;top:106px;width:1px;height:16px;background:#2d2d2d"></div>
<svg style="left:1422px;top:110px" width="14" height="9" viewBox="0 0 14 9"><path d="M-1 3 H4.2 L1.6 6 Z" fill="#e0e0e0"/><path d="M-1 2.5 H4.2" stroke="#1e1e1e" stroke-width="1"/><path d="M5.5 .5 H13.5 M5.5 2.6 H13.5 M5.5 4.7 H13.5 M5.5 6.8 H13.5" stroke="#1a1a1a" stroke-width="1"/><path d="M5.5 1.5 H13.5 M5.5 3.6 H13.5 M5.5 5.7 H13.5 M5.5 7.8 H13.5" stroke="#e4e4e4" stroke-width="1"/></svg>
<div class="a" style="left:1217px;top:123px;width:223px;height:194px;background:#464646"></div>
<div class="a" style="left:1217px;top:125px;width:204px;height:84px;background:#333"></div>
<div class="a" style="left:1217px;top:209px;width:36px;height:12px;background:#333"></div>
<div class="a" style="left:1217px;top:125px;width:11px;height:11px;background:#FF0000"></div>
<div class="a" style="left:1229px;top:125px;width:11px;height:11px;background:#FFFF00"></div>
<div class="a" style="left:1241px;top:125px;width:11px;height:11px;background:#00FF00"></div>
<div class="a" style="left:1253px;top:125px;width:11px;height:11px;background:#00FFFF"></div>
<div class="a" style="left:1265px;top:125px;width:11px;height:11px;background:#0000FF"></div>
<div class="a" style="left:1277px;top:125px;width:11px;height:11px;background:#FF00FF"></div>
<div class="a" style="left:1289px;top:125px;width:11px;height:11px;background:#FFFFFF"></div>
<div class="a" style="left:1301px;top:125px;width:11px;height:11px;background:#EBEBEB"></div>
<div class="a" style="left:1313px;top:125px;width:11px;height:11px;background:#E1E1E1"></div>
<div class="a" style="left:1325px;top:125px;width:11px;height:11px;background:#D7D7D7"></div>
<div class="a" style="left:1337px;top:125px;width:11px;height:11px;background:#CCCCCC"></div>
<div class="a" style="left:1349px;top:125px;width:11px;height:11px;background:#C2C2C2"></div>
<div class="a" style="left:1361px;top:125px;width:11px;height:11px;background:#B7B7B7"></div>
<div class="a" style="left:1373px;top:125px;width:11px;height:11px;background:#ACACAC"></div>
<div class="a" style="left:1385px;top:125px;width:11px;height:11px;background:#A0A0A0"></div>
<div class="a" style="left:1397px;top:125px;width:11px;height:11px;background:#959595"></div>
<div class="a" style="left:1409px;top:125px;width:11px;height:11px;background:#ED1C24"></div>
<div class="a" style="left:1217px;top:137px;width:11px;height:11px;background:#FFF200"></div>
<div class="a" style="left:1229px;top:137px;width:11px;height:11px;background:#00A651"></div>
<div class="a" style="left:1241px;top:137px;width:11px;height:11px;background:#00AEEF"></div>
<div class="a" style="left:1253px;top:137px;width:11px;height:11px;background:#2E3192"></div>
<div class="a" style="left:1265px;top:137px;width:11px;height:11px;background:#EC008C"></div>
<div class="a" style="left:1277px;top:137px;width:11px;height:11px;background:#898989"></div>
<div class="a" style="left:1289px;top:137px;width:11px;height:11px;background:#7D7D7D"></div>
<div class="a" style="left:1301px;top:137px;width:11px;height:11px;background:#707070"></div>
<div class="a" style="left:1313px;top:137px;width:11px;height:11px;background:#626262"></div>
<div class="a" style="left:1325px;top:137px;width:11px;height:11px;background:#555555"></div>
<div class="a" style="left:1337px;top:137px;width:11px;height:11px;background:#464646"></div>
<div class="a" style="left:1349px;top:137px;width:11px;height:11px;background:#363636"></div>
<div class="a" style="left:1361px;top:137px;width:11px;height:11px;background:#262626"></div>
<div class="a" style="left:1373px;top:137px;width:11px;height:11px;background:#111111"></div>
<div class="a" style="left:1385px;top:137px;width:11px;height:11px;background:#000000"></div>
<div class="a" style="left:1397px;top:137px;width:11px;height:11px;background:#F69679"></div>
<div class="a" style="left:1409px;top:137px;width:11px;height:11px;background:#F9AD81"></div>
<div class="a" style="left:1217px;top:149px;width:11px;height:11px;background:#FDC68A"></div>
<div class="a" style="left:1229px;top:149px;width:11px;height:11px;background:#FFF79A"></div>
<div class="a" style="left:1241px;top:149px;width:11px;height:11px;background:#C4DF9B"></div>
<div class="a" style="left:1253px;top:149px;width:11px;height:11px;background:#A2D39C"></div>
<div class="a" style="left:1265px;top:149px;width:11px;height:11px;background:#82CA9D"></div>
<div class="a" style="left:1277px;top:149px;width:11px;height:11px;background:#7BCDC8"></div>
<div class="a" style="left:1289px;top:149px;width:11px;height:11px;background:#6ECFF6"></div>
<div class="a" style="left:1301px;top:149px;width:11px;height:11px;background:#7EA7D8"></div>
<div class="a" style="left:1313px;top:149px;width:11px;height:11px;background:#8493CA"></div>
<div class="a" style="left:1325px;top:149px;width:11px;height:11px;background:#8882BE"></div>
<div class="a" style="left:1337px;top:149px;width:11px;height:11px;background:#A187BE"></div>
<div class="a" style="left:1349px;top:149px;width:11px;height:11px;background:#BC8DBF"></div>
<div class="a" style="left:1361px;top:149px;width:11px;height:11px;background:#F49AC2"></div>
<div class="a" style="left:1373px;top:149px;width:11px;height:11px;background:#F6989D"></div>
<div class="a" style="left:1385px;top:149px;width:11px;height:11px;background:#F26C4F"></div>
<div class="a" style="left:1397px;top:149px;width:11px;height:11px;background:#F68E55"></div>
<div class="a" style="left:1409px;top:149px;width:11px;height:11px;background:#FBAF5C"></div>
<div class="a" style="left:1217px;top:161px;width:11px;height:11px;background:#FFF467"></div>
<div class="a" style="left:1229px;top:161px;width:11px;height:11px;background:#ACD372"></div>
<div class="a" style="left:1241px;top:161px;width:11px;height:11px;background:#7CC576"></div>
<div class="a" style="left:1253px;top:161px;width:11px;height:11px;background:#3BB878"></div>
<div class="a" style="left:1265px;top:161px;width:11px;height:11px;background:#1ABBB4"></div>
<div class="a" style="left:1277px;top:161px;width:11px;height:11px;background:#00BFF3"></div>
<div class="a" style="left:1289px;top:161px;width:11px;height:11px;background:#438CCA"></div>
<div class="a" style="left:1301px;top:161px;width:11px;height:11px;background:#5574B9"></div>
<div class="a" style="left:1313px;top:161px;width:11px;height:11px;background:#605CA8"></div>
<div class="a" style="left:1325px;top:161px;width:11px;height:11px;background:#855FA8"></div>
<div class="a" style="left:1337px;top:161px;width:11px;height:11px;background:#A763A8"></div>
<div class="a" style="left:1349px;top:161px;width:11px;height:11px;background:#F06EA9"></div>
<div class="a" style="left:1361px;top:161px;width:11px;height:11px;background:#F26D7D"></div>
<div class="a" style="left:1373px;top:161px;width:11px;height:11px;background:#ED1C24"></div>
<div class="a" style="left:1385px;top:161px;width:11px;height:11px;background:#F26522"></div>
<div class="a" style="left:1397px;top:161px;width:11px;height:11px;background:#F7941D"></div>
<div class="a" style="left:1409px;top:161px;width:11px;height:11px;background:#FFF200"></div>
<div class="a" style="left:1217px;top:173px;width:11px;height:11px;background:#8DC73F"></div>
<div class="a" style="left:1229px;top:173px;width:11px;height:11px;background:#39B54A"></div>
<div class="a" style="left:1241px;top:173px;width:11px;height:11px;background:#00A651"></div>
<div class="a" style="left:1253px;top:173px;width:11px;height:11px;background:#00A99D"></div>
<div class="a" style="left:1265px;top:173px;width:11px;height:11px;background:#00AEEF"></div>
<div class="a" style="left:1277px;top:173px;width:11px;height:11px;background:#0072BC"></div>
<div class="a" style="left:1289px;top:173px;width:11px;height:11px;background:#0054A6"></div>
<div class="a" style="left:1301px;top:173px;width:11px;height:11px;background:#2E3192"></div>
<div class="a" style="left:1313px;top:173px;width:11px;height:11px;background:#662D91"></div>
<div class="a" style="left:1325px;top:173px;width:11px;height:11px;background:#92278F"></div>
<div class="a" style="left:1337px;top:173px;width:11px;height:11px;background:#EC008C"></div>
<div class="a" style="left:1349px;top:173px;width:11px;height:11px;background:#ED145B"></div>
<div class="a" style="left:1361px;top:173px;width:11px;height:11px;background:#9E0B0F"></div>
<div class="a" style="left:1373px;top:173px;width:11px;height:11px;background:#A0410D"></div>
<div class="a" style="left:1385px;top:173px;width:11px;height:11px;background:#A36209"></div>
<div class="a" style="left:1397px;top:173px;width:11px;height:11px;background:#ABA000"></div>
<div class="a" style="left:1409px;top:173px;width:11px;height:11px;background:#598527"></div>
<div class="a" style="left:1217px;top:185px;width:11px;height:11px;background:#1A7B30"></div>
<div class="a" style="left:1229px;top:185px;width:11px;height:11px;background:#007236"></div>
<div class="a" style="left:1241px;top:185px;width:11px;height:11px;background:#00746B"></div>
<div class="a" style="left:1253px;top:185px;width:11px;height:11px;background:#0076A3"></div>
<div class="a" style="left:1265px;top:185px;width:11px;height:11px;background:#004B80"></div>
<div class="a" style="left:1277px;top:185px;width:11px;height:11px;background:#003471"></div>
<div class="a" style="left:1289px;top:185px;width:11px;height:11px;background:#1B1464"></div>
<div class="a" style="left:1301px;top:185px;width:11px;height:11px;background:#440E62"></div>
<div class="a" style="left:1313px;top:185px;width:11px;height:11px;background:#630460"></div>
<div class="a" style="left:1325px;top:185px;width:11px;height:11px;background:#9E005D"></div>
<div class="a" style="left:1337px;top:185px;width:11px;height:11px;background:#9E0039"></div>
<div class="a" style="left:1349px;top:185px;width:11px;height:11px;background:#790000"></div>
<div class="a" style="left:1361px;top:185px;width:11px;height:11px;background:#7B2E00"></div>
<div class="a" style="left:1373px;top:185px;width:11px;height:11px;background:#7D4900"></div>
<div class="a" style="left:1385px;top:185px;width:11px;height:11px;background:#827B00"></div>
<div class="a" style="left:1397px;top:185px;width:11px;height:11px;background:#406618"></div>
<div class="a" style="left:1409px;top:185px;width:11px;height:11px;background:#005E20"></div>
<div class="a" style="left:1217px;top:197px;width:11px;height:11px;background:#005826"></div>
<div class="a" style="left:1229px;top:197px;width:11px;height:11px;background:#005952"></div>
<div class="a" style="left:1241px;top:197px;width:11px;height:11px;background:#005B7F"></div>
<div class="a" style="left:1253px;top:197px;width:11px;height:11px;background:#003663"></div>
<div class="a" style="left:1265px;top:197px;width:11px;height:11px;background:#002157"></div>
<div class="a" style="left:1277px;top:197px;width:11px;height:11px;background:#0D004C"></div>
<div class="a" style="left:1289px;top:197px;width:11px;height:11px;background:#32004B"></div>
<div class="a" style="left:1301px;top:197px;width:11px;height:11px;background:#4B0049"></div>
<div class="a" style="left:1313px;top:197px;width:11px;height:11px;background:#7B0046"></div>
<div class="a" style="left:1325px;top:197px;width:11px;height:11px;background:#7A0026"></div>
<div class="a" style="left:1337px;top:197px;width:11px;height:11px;background:#C7B299"></div>
<div class="a" style="left:1349px;top:197px;width:11px;height:11px;background:#998675"></div>
<div class="a" style="left:1361px;top:197px;width:11px;height:11px;background:#736357"></div>
<div class="a" style="left:1373px;top:197px;width:11px;height:11px;background:#534741"></div>
<div class="a" style="left:1385px;top:197px;width:11px;height:11px;background:#362F2D"></div>
<div class="a" style="left:1397px;top:197px;width:11px;height:11px;background:#C69C6D"></div>
<div class="a" style="left:1409px;top:197px;width:11px;height:11px;background:#A67C52"></div>
<div class="a" style="left:1217px;top:209px;width:11px;height:11px;background:#8C6239"></div>
<div class="a" style="left:1229px;top:209px;width:11px;height:11px;background:#754C24"></div>
<div class="a" style="left:1241px;top:209px;width:11px;height:11px;background:#603913"></div>
<div class="a" style="left:1423px;top:123px;width:17px;height:194px;background:linear-gradient(90deg,#383838,#464646 55%,#3e3e3e)"></div>
<div class="a" style="left:1217px;top:316px;width:223px;height:1px;background:#666"></div>
<div class="a" style="left:1217px;top:317px;width:223px;height:17px;background:#535353"></div>
<div class="a" style="left:1217px;top:334px;width:223px;height:3px;background:#2f2f2f"></div>
<svg style="left:1371px;top:321px" width="11" height="10" viewBox="0 0 11 10"><path d="M.5 .5 H10.5 V9.5 H5 L.5 5 Z" fill="#8e8e8e"/><path d="M.5 5 H5 V9.5 Z" fill="#bdbdbd"/></svg>
<svg style="left:1399px;top:319px" width="12" height="13" viewBox="0 0 12 13"><path d="M4 2.6 V1 H8 V2.6" fill="none" stroke="#868686" stroke-width="1"/><rect x=".4" y="2.6" width="11.2" height="1.6" fill="#868686"/><path d="M1.6 5 H10.4 L9.6 12.8 H2.4 Z" fill="#868686"/><path d="M4.2 6 V11.6 M6 6 V11.6 M7.8 6 V11.6" stroke="#535353" stroke-width=".9"/></svg>
<svg style="left:1428px;top:323px" width="10" height="10" viewBox="0 0 10 10"><g fill="#7a7a7a"><rect x="8" y="0" width="1" height="1"/><rect x="6" y="2" width="1" height="1"/><rect x="8" y="2" width="1" height="1"/><rect x="4" y="4" width="1" height="1"/><rect x="6" y="4" width="1" height="1"/><rect x="8" y="4" width="1" height="1"/><rect x="2" y="6" width="1" height="1"/><rect x="4" y="6" width="1" height="1"/><rect x="6" y="6" width="1" height="1"/><rect x="8" y="6" width="1" height="1"/><rect x="0" y="8" width="1" height="1"/><rect x="2" y="8" width="1" height="1"/><rect x="4" y="8" width="1" height="1"/><rect x="6" y="8" width="1" height="1"/><rect x="8" y="8" width="1" height="1"/></g></svg>
<div class="a" style="left:1217px;top:337px;width:223px;height:17px;background:linear-gradient(#3f3f3f,#383838)"></div>
<div class="a" style="left:1217px;top:353px;width:223px;height:1px;background:#2d2d2d"></div>
<div class="a" style="left:1217px;top:337px;width:73px;height:17px;background:#535353;border-top:1px solid #626262"></div>
<div class="t" style="left:1224.6px;top:338.54px;font-size:10px;line-height:14px;height:14px;color:#f2f2f2;font-weight:bold;transform:scaleX(0.9511);transform-origin:0 0">Adjustments</div>
<div class="a" style="left:1290px;top:337px;width:1px;height:16px;background:#2d2d2d"></div>
<div class="t" style="left:1297.2px;top:338.54px;font-size:10px;line-height:14px;height:14px;color:#a9a9a9;font-weight:bold;transform:scaleX(0.9232);transform-origin:0 0">Styles</div>
<div class="a" style="left:1332px;top:337px;width:1px;height:16px;background:#2d2d2d"></div>
<svg style="left:1422px;top:341px" width="14" height="9" viewBox="0 0 14 9"><path d="M-1 3 H4.2 L1.6 6 Z" fill="#e0e0e0"/><path d="M-1 2.5 H4.2" stroke="#1e1e1e" stroke-width="1"/><path d="M5.5 .5 H13.5 M5.5 2.6 H13.5 M5.5 4.7 H13.5 M5.5 6.8 H13.5" stroke="#1a1a1a" stroke-width="1"/><path d="M5.5 1.5 H13.5 M5.5 3.6 H13.5 M5.5 5.7 H13.5 M5.5 7.8 H13.5" stroke="#e4e4e4" stroke-width="1"/></svg>
<div class="t" style="left:1226px;top:358.54px;font-size:10px;line-height:14px;height:14px;color:#fff;font-weight:bold;transform:scaleX(1.0499);transform-origin:0 0">Add an adjustment</div>
<div class="a" style="left:1217px;top:457px;width:223px;height:3px;background:#2f2f2f"></div>
<svg style="left:0;top:0" width="0" height="0"><defs><linearGradient id="ag" x1="0" y1="0" x2="0" y2="1"><stop offset="0" stop-color="#dcdcdc"/><stop offset="1" stop-color="#a4a4a4"/></linearGradient><linearGradient id="ah" x1="0" y1="0" x2="1" y2="0"><stop offset="0" stop-color="#2e2e2e"/><stop offset="1" stop-color="#b8b8b8"/></linearGradient><linearGradient id="ai" x1="0" y1="0" x2="1" y2="0"><stop offset="0" stop-color="#d8d8d8"/><stop offset="1" stop-color="#9a9a9a"/></linearGradient><radialGradient id="av" cx=".5" cy=".3" r=".45"><stop offset="0" stop-color="#6e6e6e"/><stop offset="1" stop-color="#d0d0d0"/></radialGradient></defs></svg>
<svg style="left:1263px;top:378px" width="17" height="17" viewBox="0 0 17 17"><g transform="translate(8.5 8.5)"><rect x="-0.9" y="-8.4" width="1.8" height="2.6" fill="#d4d4d4" transform="rotate(0)"/><rect x="-0.9" y="-8.4" width="1.8" height="2.6" fill="#d4d4d4" transform="rotate(45)"/><rect x="-0.9" y="-8.4" width="1.8" height="2.6" fill="#d4d4d4" transform="rotate(90)"/><rect x="-0.9" y="-8.4" width="1.8" height="2.6" fill="#d4d4d4" transform="rotate(135)"/><rect x="-0.9" y="-8.4" width="1.8" height="2.6" fill="#d4d4d4" transform="rotate(180)"/><rect x="-0.9" y="-8.4" width="1.8" height="2.6" fill="#d4d4d4" transform="rotate(225)"/><rect x="-0.9" y="-8.4" width="1.8" height="2.6" fill="#d4d4d4" transform="rotate(270)"/><rect x="-0.9" y="-8.4" width="1.8" height="2.6" fill="#d4d4d4" transform="rotate(315)"/><circle r="4.1" fill="none" stroke="#d4d4d4" stroke-width="1.2"/><path d="M0 -4.1 A4.1 4.1 0 0 1 0 4.1 Z" fill="#d4d4d4"/></g></svg>
<svg style="left:1287px;top:380px" width="18" height="11" viewBox="0 0 18 11"><path d="M0 11 V4 L1 3 L2 6.4 L3.2 6.4 L4 1.6 L5 6 L6 6 L7 2.4 L8 5.6 L9 0 L10 5.6 L11 2.4 L12 6 L13 6 L14 1.6 L14.8 6.4 L16 6.4 L17 3 L18 4 V11 Z" fill="url(#ag)"/><path d="M0 8.6 H18" stroke="#9a9a9a" stroke-width=".5"/></svg>
<svg style="left:1312px;top:380px" width="16" height="13" viewBox="0 0 16 13"><rect x=".5" y=".5" width="15" height="12" fill="#6a6a6a" stroke="#cdcdcd"/><path d="M5.5 .5 V12.5 M10.5 .5 V12.5 M.5 4.5 H15.5 M.5 8.5 H15.5" stroke="#b0b0b0" stroke-width=".8"/><path d="M.8 12 C7 12 8 1.2 15.2 1.2" fill="none" stroke="#f0f0f0" stroke-width="1.3"/></svg>
<svg style="left:1336px;top:380px" width="16" height="13" viewBox="0 0 16 13"><rect x=".5" y=".5" width="15" height="12" fill="#4a4a4a" stroke="#cdcdcd"/><path d="M1 1 H15 L1 12 Z" fill="#c4c4c4"/><path d="M2.5 4.5 H7 M4.7 2.3 V6.8" stroke="#2e2e2e" stroke-width="1"/><path d="M9.5 9 H13.5" stroke="#e6e6e6" stroke-width="1"/></svg>
<svg style="left:1360px;top:379px" width="16" height="15" viewBox="0 0 16 15"><path d="M0 .2 H16 L8 15 Z" fill="url(#av)"/></svg>
<svg style="left:1252px;top:407px" width="16" height="13" viewBox="0 0 16 13"><rect x=".5" y=".5" width="15" height="12" fill="#9a9a9a" stroke="#cdcdcd"/><rect x="1" y="1" width="14" height="4.4" fill="#b8b8b8"/><rect x="3" y="1" width="2" height="4.4" fill="#6e6e6e"/><rect x="7" y="1" width="2" height="4.4" fill="#d8d8d8"/><rect x="11" y="1" width="2" height="4.4" fill="#6e6e6e"/><rect x="1" y="6.4" width="14" height="5.6" fill="url(#ah)"/></svg>
<svg style="left:1275px;top:405px" width="17" height="15" viewBox="0 0 17 15"><g fill="none" stroke="#d0d0d0" stroke-width="1.1"><path d="M3 3.5 H14 M8.5 .5 V4"/><path d="M3.5 4 L.8 11 M3.5 4 L6.2 11 M13.5 4 L10.8 11 M13.5 4 L16.2 11"/></g><path d="M6.4 1.2 H10.6 L8.5 4.6 Z" fill="#d0d0d0"/><path d="M0 11 H7 Q6.6 14.4 3.5 14.4 Q.4 14.4 0 11 Z M10 11 H17 Q16.6 14.4 13.5 14.4 Q10.4 14.4 10 11 Z" fill="url(#ag)"/></svg>
<svg style="left:1300px;top:407px" width="16" height="13" viewBox="0 0 16 13"><rect x=".5" y=".5" width="15" height="12" fill="#3e3e3e" stroke="#cdcdcd"/><rect x="8" y="1" width="7" height="11" fill="url(#ag)"/></svg>
<svg style="left:1323px;top:405px" width="18" height="16" viewBox="0 0 18 16"><path d="M0 2.4 H2.4 V1 H6 V2.4 H14 V11 H0 Z" fill="url(#ag)"/><circle cx="7.4" cy="6.6" r="2.3" fill="none" stroke="#4a4a4a" stroke-width="1"/><circle cx="12.2" cy="10.8" r="4.3" fill="rgba(120,120,120,.75)" stroke="#d0d0d0" stroke-width="1"/></svg>
<svg style="left:1347px;top:405px" width="17" height="15" viewBox="0 0 17 15"><circle cx="8.5" cy="4.6" r="4.4" fill="#c8c8c8"/><circle cx="4.6" cy="10.4" r="4.4" fill="#b8b8b8"/><circle cx="12.4" cy="10.4" r="4.4" fill="#a8a8a8"/><path d="M5.6 6.8 Q8.5 8 11.4 6.8 Q10.6 9.4 8.5 13.2 Q6.4 9.4 5.6 6.8 Z" fill="#3c3c3c"/></svg>
<svg style="left:1372px;top:407px" width="16" height="13" viewBox="0 0 16 13"><rect x=".5" y=".5" width="15" height="12" fill="#5a5a5a" stroke="#cdcdcd"/><rect x="1" y="1" width="4.4" height="3.4" fill="#c8c8c8"/><rect x="1" y="5" width="4.4" height="3.4" fill="#8a8a8a"/><rect x="6" y="1" width="4.4" height="3.4" fill="#7a7a7a"/><path d="M5.5 .5 V12.5 M10.5 .5 V12.5 M.5 4.5 H15.5 M.5 8.5 H15.5" stroke="#cdcdcd" stroke-width="1"/></svg>
<svg style="left:1264px;top:434px" width="16" height="13" viewBox="0 0 16 13"><rect x=".5" y=".5" width="15" height="12" fill="url(#ag)" stroke="#cdcdcd"/><ellipse cx="8" cy="6.5" rx="3.8" ry="2.8" fill="#505050" transform="rotate(-25 8 6.5)"/><path d="M1 12 L6 7 M10 5.5 L15 1" stroke="#505050" stroke-width="1.1"/><path d="M1 1 H9 L1 8 Z" fill="#c4c4c4" opacity=".5"/></svg>
<svg style="left:1288px;top:434px" width="16" height="13" viewBox="0 0 16 13"><rect x=".5" y=".5" width="15" height="12" fill="#8a8a8a" stroke="#cdcdcd"/><path d="M1 6 L8 1 H12 L1 10 Z" fill="#c8c8c8"/><path d="M4 12 L15 3 V7 L9 12 Z" fill="#bdbdbd"/><path d="M12 12 L15 9.5 V12 Z" fill="#4a4a4a"/><path d="M1 1 H5 L1 4 Z" fill="#5a5a5a"/></svg>
<svg style="left:1312px;top:434px" width="16" height="13" viewBox="0 0 16 13"><rect x=".5" y=".5" width="15" height="12" fill="#c4c4c4" stroke="#cdcdcd"/><path d="M2 8.4 V6.4 H5 V4.8 H8.4 V3.2 H11.6 V1.8 H14 V3.6 H12 V5.2 H9 V6.8 H5.6 V8.4 Z" fill="#4a4a4a"/><path d="M10 11.4 V10 H12.4 V8.6 H14.4 V11.4 Z" fill="#4a4a4a"/></svg>
<svg style="left:1336px;top:434px" width="16" height="13" viewBox="0 0 16 13"><rect x=".5" y=".5" width="15" height="12" fill="#707070" stroke="#cdcdcd"/><path d="M1 1 L8 6.5 L1 12 Z M15 1 L8 6.5 L15 12 Z" fill="#5c5c5c"/><path d="M1 1 H15 L8 6.5 Z" fill="#c6c6c6"/><path d="M1 12 H15 L8 6.5 Z" fill="#a2a2a2"/></svg>
<svg style="left:1360px;top:434px" width="16" height="13" viewBox="0 0 16 13"><rect x=".5" y=".5" width="15" height="12" fill="url(#ah)" stroke="#cdcdcd"/></svg>
<!-- ---------- layers panel ---------- -->
<div class="a" style="left:1217px;top:460px;width:223px;height:17px;background:linear-gradient(#3f3f3f,#383838)"></div>
<div class="a" style="left:1217px;top:476px;width:223px;height:1px;background:#2d2d2d"></div>
<div class="a" style="left:1217px;top:460px;width:43px;height:17px;background:#535353;border-top:1px solid #626262"></div>
<div class="a" style="left:1260px;top:460px;width:1px;height:16px;background:#2d2d2d"></div>
<div class="a" style="left:1316px;top:460px;width:1px;height:16px;background:#2d2d2d"></div>
<div class="a" style="left:1357px;top:460px;width:1px;height:16px;background:#2d2d2d"></div>
<div class="t" style="left:1224.3px;top:461.54px;font-size:10px;line-height:14px;height:14px;color:#f2f2f2;font-weight:bold;transform:scaleX(0.8745);transform-origin:0 0">Layers</div>
<div class="t" style="left:1267px;top:461.54px;font-size:10px;line-height:14px;height:14px;color:#a9a9a9;font-weight:bold;transform:scaleX(0.9154);transform-origin:0 0">Channels</div>
<div class="t" style="left:1324.3px;top:461.54px;font-size:10px;line-height:14px;height:14px;color:#a9a9a9;font-weight:bold;transform:scaleX(0.9180);transform-origin:0 0">Paths</div>
<svg style="left:1422px;top:464px" width="14" height="9" viewBox="0 0 14 9"><path d="M-1 3 H4.2 L1.6 6 Z" fill="#e0e0e0"/><path d="M-1 2.5 H4.2" stroke="#1e1e1e" stroke-width="1"/><path d="M5.5 .5 H13.5 M5.5 2.6 H13.5 M5.5 4.7 H13.5 M5.5 6.8 H13.5" stroke="#1a1a1a" stroke-width="1"/><path d="M5.5 1.5 H13.5 M5.5 3.6 H13.5 M5.5 5.7 H13.5 M5.5 7.8 H13.5" stroke="#e4e4e4" stroke-width="1"/></svg>
<!-- filter row -->
<div class="pop" style="left:1221px;top:482px;width:69px;height:19px;background:linear-gradient(#5c5c5c,#4e4e4e);border-color:#3a3a3a"></div>
<svg style="left:1228px;top:486px" width="10" height="10" viewBox="0 0 10 10"><circle cx="6" cy="4" r="3" fill="none" stroke="#9c9c9c" stroke-width="1.3"/><path d="M3.8 6.2 L1 9" stroke="#9c9c9c" stroke-width="1.6" stroke-linecap="round"/></svg>
<div class="t" style="left:1243.2px;top:484.44px;font-size:10px;line-height:14px;height:14px;color:#b4b4b4;transform:scaleX(0.9493);transform-origin:0 0">Kind</div>
<svg style="left:1281px;top:486px" width="7" height="11" viewBox="0 0 7 11"><path d="M3.5 0 L6.6 4 H.4 Z M3.5 11 L6.6 7 H.4 Z" fill="#a8a8a8"/></svg>
<svg style="left:1303px;top:485px" width="13" height="11" viewBox="0 0 13 11"><rect x=".5" y=".5" width="12" height="10" fill="none" stroke="#8c8c8c"/><path d="M2 9 L5 5.4 L7 7.4 L8.6 6 L11 9 Z" fill="#8c8c8c"/><circle cx="9.6" cy="3.2" r="1" fill="#8c8c8c"/></svg>
<svg style="left:1328px;top:485px" width="11" height="11" viewBox="0 0 11 11"><circle cx="5.5" cy="5.5" r="4.8" fill="none" stroke="#8c8c8c" stroke-width="1.2"/><path d="M2.1 8.9 A4.8 4.8 0 0 1 8.9 2.1 Z" fill="#8c8c8c"/></svg>
<div class="t" style="left:1351.7px;top:480.04px;font-size:15.3px;line-height:20px;height:20px;color:#8c8c8c;font-family:'Liberation Serif',serif;transform:scaleX(1.1556);transform-origin:0 0;text-shadow:.4px 0 0 #8c8c8c">T</div>
<svg style="left:1376px;top:485px" width="11" height="11" viewBox="0 0 11 11"><rect x="1.5" y="1.5" width="8" height="8" fill="none" stroke="#8c8c8c" stroke-width="1.2"/><g fill="#535353" stroke="#8c8c8c" stroke-width=".9"><rect x=".5" y=".5" width="2" height="2"/><rect x="8.5" y=".5" width="2" height="2"/><rect x=".5" y="8.5" width="2" height="2"/><rect x="8.5" y="8.5" width="2" height="2"/></g></svg>
<svg style="left:1400px;top:485px" width="12" height="12" viewBox="0 0 12 12"><path d="M3.5 .5 H8.5 L11.5 3.5 V11 H3.5 Z" fill="none" stroke="#8c8c8c"/><path d="M8.5 .5 V3.5 H11.5" fill="none" stroke="#8c8c8c" stroke-width=".8"/><rect x="0" y="6" width="6" height="6" fill="#7c7c7c"/></svg>
<div class="a" style="left:1425px;top:482px;width:9px;height:17px;background:#404040;border:1px solid #3a3a3a;border-radius:1px"></div>
<div class="a" style="left:1426px;top:483px;width:7px;height:7px;background:linear-gradient(#6c6c6c,#585858)"></div>
<div class="a" style="left:1217px;top:504px;width:223px;height:1px;background:#3c3c3c"></div>
<div class="a" style="left:1217px;top:505px;width:223px;height:1px;background:#5e5e5e"></div>
<!-- blend row -->
<div class="pop" style="left:1221px;top:510px;width:110px;height:19px"></div><div class="t" style="left:1229.2px;top:512.43px;font-size:10px;line-height:14px;height:14px;color:#f0f0f0;transform:scaleX(0.9650);transform-origin:0 0">Normal</div>
<svg style="left:1321px;top:514px" width="7" height="11" viewBox="0 0 7 11"><path d="M3.5 0 L6.6 4 H.4 Z M3.5 11 L6.6 7 H.4 Z" fill="#f0f0f0"/></svg>
<div class="t" style="left:1339.3px;top:511.14px;font-size:10px;line-height:14px;height:14px;color:#f0f0f0;transform:scaleX(0.9733);transform-origin:0 0">Opacity:</div>
<div class="field" style="left:1381px;top:509px;width:53px;height:19px;background:#333"><div class="dd" style="width:18px"></div></div><div class="t" style="left:1386.6px;top:512.43px;font-size:10px;line-height:14px;height:14px;color:#f0f0f0;transform:scaleX(0.9306);transform-origin:0 0">100%</div>
<div class="a" style="left:1217px;top:532px;width:223px;height:1px;background:#3c3c3c"></div>
<div class="a" style="left:1217px;top:533px;width:223px;height:1px;background:#5e5e5e"></div>
<!-- lock row -->
<div class="t" style="left:1223px;top:541.13px;font-size:10px;line-height:14px;height:14px;color:#b0b0b0;transform:scaleX(0.9581);transform-origin:0 0">Lock:</div>
<svg style="left:1256px;top:542px" width="11" height="11" viewBox="0 0 11 11"><rect width="11" height="11" fill="#6a6a6a"/><g fill="#8e8e8e"><rect x="1" y="1" width="3" height="3"/><rect x="7" y="1" width="3" height="3"/><rect x="4" y="4" width="3" height="3"/><rect x="1" y="7" width="3" height="3"/><rect x="7" y="7" width="3" height="3"/></g></svg>
<svg style="left:1276px;top:540px" width="16" height="13" viewBox="0 0 16 13"><path d="M14.6 .2 Q16 .6 15.4 1.8 L9.4 9 L8 7.8 Z" fill="#8e8e8e"/><path d="M0 11.6 Q4 11.2 7 7.8 L9 9.8 Q8.8 13 5 12.8 Q2 12.6 0 11.6 Z" fill="#8e8e8e"/></svg>
<svg style="left:1299px;top:540px" width="13" height="13" viewBox="0 0 13 13"><g fill="none" stroke="#8e8e8e" stroke-width="1"><path d="M6.5 1 V12 M1 6.5 H12"/><path d="M4.6 2.8 L6.5 .8 L8.4 2.8 M4.6 10.2 L6.5 12.2 L8.4 10.2 M2.8 4.6 L.8 6.5 L2.8 8.4 M10.2 4.6 L12.2 6.5 L10.2 8.4"/></g></svg>
<svg style="left:1323px;top:541px" width="10" height="12" viewBox="0 0 10 12"><path d="M2.4 5.4 V3.4 Q2.4 .9 5 .9 Q7.6 .9 7.6 3.4 V5.4" fill="none" stroke="#8e8e8e" stroke-width="1.5"/><rect x=".5" y="5.2" width="9" height="6.6" rx=".8" fill="#8e8e8e"/><rect x="4.3" y="7.2" width="1.4" height="2.6" fill="#535353"/></svg>
<div class="t" style="left:1361.4px;top:539.33px;font-size:10px;line-height:14px;height:14px;color:#f0f0f0;transform:scaleX(0.8745);transform-origin:0 0">Fill:</div>
<div class="field" style="left:1381px;top:537px;width:53px;height:19px;background:#3a3a3a"><div class="dd" style="width:18px"></div></div><div class="t" style="left:1386.6px;top:540.03px;font-size:10px;line-height:14px;height:14px;color:#8c8c8c;transform:scaleX(0.9306);transform-origin:0 0">100%</div>
<div class="a" style="left:1217px;top:562px;width:223px;height:1px;background:#3a3a3a"></div>
<!-- layer list -->
<div class="a" style="left:1217px;top:563px;width:207px;height:317px;background:#464646"></div>
<div class="a" style="left:1217px;top:563px;width:207px;height:109px;background:#535353"></div>
<div class="a" style="left:1248px;top:563px;width:176px;height:38px;background:#596678"></div>
<div class="a" style="left:1217px;top:601px;width:207px;height:1px;background:#3c3c3c"></div>
<div class="a" style="left:1217px;top:640px;width:207px;height:1px;background:#3c3c3c"></div>
<div class="a" style="left:1217px;top:672px;width:207px;height:1px;background:#3c3c3c"></div>
<div class="a" style="left:1247px;top:563px;width:1px;height:109px;background:#3c3c3c"></div>
<div class="a" style="left:1424px;top:563px;width:16px;height:317px;background:linear-gradient(90deg,#383838,#464646 55%,#3e3e3e)"></div>
<!-- eyes -->
<svg style="left:1225px;top:576px" width="14" height="11" viewBox="0 0 14 11"><path d="M.8 5.4 Q7 -1.6 13.2 5.4" fill="none" stroke="#2c2c2c" stroke-width="1.3"/><path d="M.6 5.8 Q7 -.4 13.4 5.8 Q7 12 .6 5.8 Z" fill="#bcbcbc"/><circle cx="7" cy="5.6" r="2.8" fill="#363636"/><circle cx="8" cy="4.7" r=".9" fill="#dadada"/></svg>
<svg style="left:1225px;top:615px" width="14" height="11" viewBox="0 0 14 11"><path d="M.8 5.4 Q7 -1.6 13.2 5.4" fill="none" stroke="#2c2c2c" stroke-width="1.3"/><path d="M.6 5.8 Q7 -.4 13.4 5.8 Q7 12 .6 5.8 Z" fill="#bcbcbc"/><circle cx="7" cy="5.6" r="2.8" fill="#363636"/><circle cx="8" cy="4.7" r=".9" fill="#dadada"/></svg>
<svg style="left:1225px;top:650px" width="14" height="11" viewBox="0 0 14 11"><path d="M.8 5.4 Q7 -1.6 13.2 5.4" fill="none" stroke="#2c2c2c" stroke-width="1.3"/><path d="M.6 5.8 Q7 -.4 13.4 5.8 Q7 12 .6 5.8 Z" fill="#bcbcbc"/><circle cx="7" cy="5.6" r="2.8" fill="#363636"/><circle cx="8" cy="4.7" r=".9" fill="#dadada"/></svg>
<!-- layer 2 thumb -->
<svg style="left:1249px;top:564px" width="36" height="36" viewBox="0 0 36 36"><g fill="none" stroke="#fff" stroke-width="1"><path d="M.5 11 V.5 H11 M25 .5 H35.5 V11 M35.5 25 V35.5 H25 M11 35.5 H.5 V25"/></g></svg>
<div class="t" style="left:1258.9px;top:566.27px;font-size:22.9px;line-height:30px;height:30px;color:#d0d0d0;font-family:'Liberation Serif',serif;transform:scaleX(1.1438);transform-origin:0 0;text-shadow:.5px 0 0 #d0d0d0">T</div>
<div class="t" style="left:1293.3px;top:576.63px;font-size:10px;line-height:14px;height:14px;color:#fff;transform:scaleX(0.9624);transform-origin:0 0">Layer 2</div>
<div class="t" style="left:1258.9px;top:605.27px;font-size:22.9px;line-height:30px;height:30px;color:#d0d0d0;font-family:'Liberation Serif',serif;transform:scaleX(1.1438);transform-origin:0 0;text-shadow:.5px 0 0 #d0d0d0">T</div>
<div class="t" style="left:1293.3px;top:615.53px;font-size:10px;line-height:14px;height:14px;color:#fff;transform:scaleX(0.9594);transform-origin:0 0">Layer 1</div>
<div class="a" style="left:1251px;top:644px;width:32px;height:24px;background:#fff;border:1px solid #000"></div>
<div class="t" style="left:1293.9px;top:650.53px;font-size:10px;line-height:14px;height:14px;color:#fff;font-style:italic">Background</div>
<svg style="left:1397px;top:650px" width="11" height="12" viewBox="0 0 11 12"><path d="M3 5.2 V3.4 Q3 1 5.5 1 Q8 1 8 3.4 V5.2" fill="none" stroke="#cfcfcf" stroke-width="1.3"/><rect x="1" y="5.5" width="9" height="6" rx=".8" fill="none" stroke="#cfcfcf" stroke-width="1.2"/><rect x="4.8" y="7.4" width="1.4" height="2.2" fill="#cfcfcf"/></svg>
<!-- footer -->
<div class="a" style="left:1217px;top:879px;width:223px;height:2px;background:#2f2f2f"></div>
<div class="a" style="left:1217px;top:881px;width:223px;height:1px;background:#686868"></div>
<div class="a" style="left:1217px;top:882px;width:223px;height:16px;background:#535353"></div>
<div class="a" style="left:1217px;top:898px;width:223px;height:2px;background:#2f2f2f"></div>
<svg style="left:1235px;top:885px" width="16" height="11" viewBox="0 0 16 11"><g fill="none" stroke="#8e8e8e" stroke-width="1.5"><path d="M6.6 2.2 H4.4 Q1.2 2.2 1.2 5.4 Q1.2 8.6 4.4 8.6 H6.6"/><path d="M9.4 2.2 H11.6 Q14.8 2.2 14.8 5.4 Q14.8 8.6 11.6 8.6 H9.4"/><path d="M4.6 5.4 H11.4"/></g></svg>
<div class="t" style="left:1264.6px;top:881.87px;font-size:12.5px;line-height:16px;height:16px;color:#8e8e8e;font-style:italic;transform:scaleX(1.0902);transform-origin:0 0">fx</div>
<svg style="left:1291px;top:885px" width="13" height="11" viewBox="0 0 13 11"><rect width="13" height="11" fill="#8e8e8e"/><circle cx="6.5" cy="5.5" r="2.6" fill="#535353"/></svg>
<svg style="left:1318px;top:885px" width="11" height="11" viewBox="0 0 11 11"><circle cx="5.5" cy="5.5" r="4.7" fill="none" stroke="#8e8e8e" stroke-width="1.3"/><path d="M2.2 8.8 A4.7 4.7 0 0 1 8.8 2.2 Z" fill="#8e8e8e"/></svg>
<svg style="left:1345px;top:885px" width="13" height="11" viewBox="0 0 13 11"><path d="M0 0 H4.6 L6 1.8 H13 V11 H0 Z" fill="#8e8e8e"/></svg>
<svg style="left:1373px;top:886px" width="10" height="10" viewBox="0 0 10 10"><path d="M0 0 H10 V10 H4.6 L0 5.4 Z" fill="#8e8e8e"/><path d="M0 5.4 H4.6 V10 Z" fill="#b8b8b8"/></svg>
<svg style="left:1399px;top:884px" width="12" height="13" viewBox="0 0 12 13"><path d="M4 2.6 V1 H8 V2.6" fill="none" stroke="#8e8e8e" stroke-width="1"/><rect x=".4" y="2.6" width="11.2" height="1.6" fill="#8e8e8e"/><path d="M1.6 5 H10.4 L9.6 12.8 H2.4 Z" fill="#8e8e8e"/><path d="M4.2 6 V11.6 M6 6 V11.6 M7.8 6 V11.6" stroke="#535353" stroke-width=".9"/></svg>
<svg style="left:1277px;top:893px" width="4" height="4" viewBox="0 0 4 4"><path d="M3.5 .5 V3.5 H.5 Z" fill="#7a7a7a"/></svg>
<svg style="left:1331px;top:893px" width="4" height="4" viewBox="0 0 4 4"><path d="M3.5 .5 V3.5 H.5 Z" fill="#7a7a7a"/></svg>
<div class="a" style="left:1439px;top:94px;width:1px;height:806px;background:#2d2d2d"></div>
</div>
</body>
</html>
